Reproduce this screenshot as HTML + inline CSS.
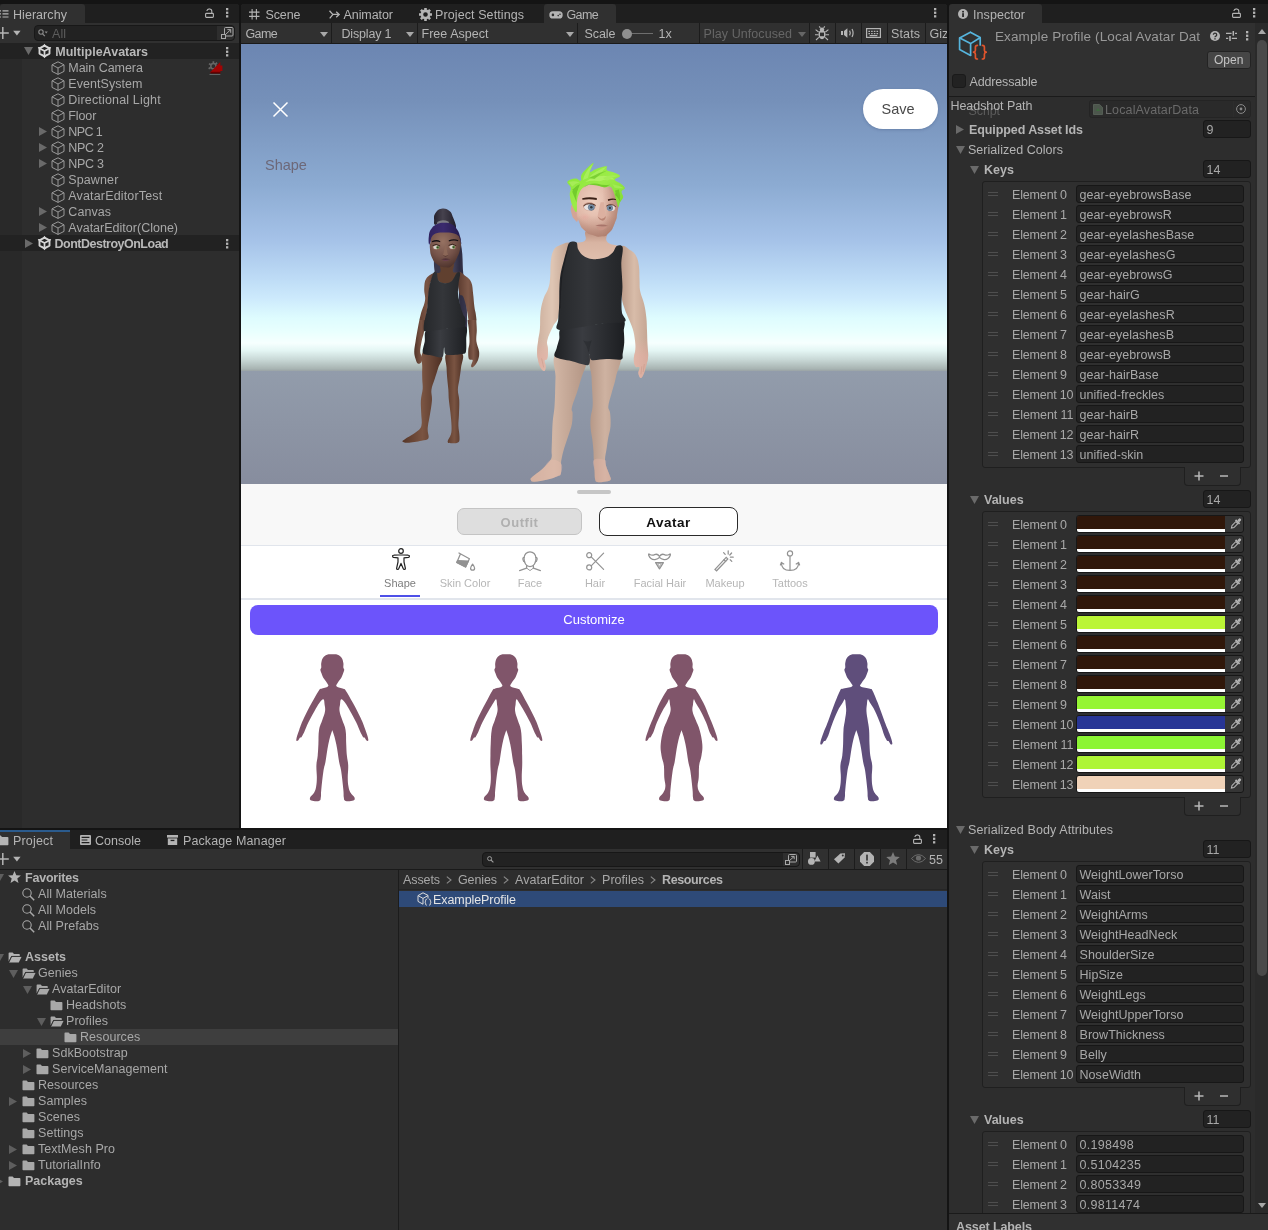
<!DOCTYPE html>
<html lang="en"><head><meta charset="utf-8"><title>Unity - MultipleAvatars</title>
<style>

*{box-sizing:border-box;margin:0;padding:0}
html,body{width:1268px;height:1230px;overflow:hidden;background:#141414}
body{position:relative;font-family:"Liberation Sans","DejaVu Sans",sans-serif;font-size:12.5px;letter-spacing:.05px;color:#a8a8a8;line-height:16px}
.abs,.p,.t,.r,svg.i{position:absolute}
.p{background:#2d2d2d;overflow:hidden}
.p,.fld{will-change:transform}
.t{white-space:nowrap;line-height:16px;height:16px;margin-top:1px}
.b{font-weight:700;letter-spacing:0}
.tabbar{position:absolute;left:0;top:0;right:0;height:19px;background:#1f1f1f}
.tab{position:absolute;top:0;height:19px;background:#303030;border-radius:3px 3px 0 0}
.tool{position:absolute;left:0;right:0;height:20px;background:#303030}
.sep{position:absolute;width:1px;background:#1c1c1c}
.hl{position:absolute;height:1px;background:#1a1a1a}
.fld{position:absolute;background:#222;border:1px solid #171717;border-radius:3px;height:18px;line-height:18px;padding-left:2.5px;white-space:nowrap;overflow:hidden;color:#a8a8a8}
.dim{color:#6d6d6d}
svg.i{overflow:visible}

</style></head>
<body>
<div class="p" style="left:0;top:4px;width:239px;height:824px;border-radius:0 3px 0 0">
<div class="tabbar"></div><div class="tab" style="left:0;width:85px"></div>
<svg class="i" style="left:0px;top:6px" width="9" height="8" viewBox="0 0 9 8" ><g stroke="#b4b4b4" stroke-width="1.2"><path d="M2.5 .8H8.5M2.5 3.9H8.5M2.5 7H8.5"/><path d="M-.5 .8H1M-.5 3.9H1M-.5 7H1"/></g></svg>
<div class="t" style="left:13px;top:2px;color:#b4b4b4">Hierarchy</div>
<svg class="i" style="left:204.5px;top:4px" width="9" height="10" viewBox="0 0 9 10" ><g fill="none" stroke="#b4b4b4" stroke-width="1.1"><rect x=".6" y="5.400" width="7.800" height="4" rx=".8"/><path d="M1.800 3C2.400 .2 6.800 .2 6.800 3.200V5.400"/></g></svg>
<svg class="i" style="left:226px;top:4.2px" width="3" height="10" viewBox="0 0 3 10" ><g fill="#b4b4b4"><rect x="0" y="0" width="2.3" height="2.3"/><rect x="0" y="3.6" width="2.3" height="2.3"/><rect x="0" y="7.200" width="2.3" height="2.3"/></g></svg>
<div class="tool" style="top:19px"></div>
<svg class="i" style="left:0px;top:23px" width="22" height="12" viewBox="0 0 22 12" ><path d="M2.8 0V12M-3.2 6H8.8" stroke="#b4b4b4" stroke-width="1.5" fill="none"/><path d="M13.2 3.8H20.6L16.9 8.4Z" fill="#b4b4b4"/></svg>
<div class="fld" style="left:34px;top:21px;width:201px;height:16px;border-radius:4px;background:#222;border-color:#181818"></div>
<div class="abs" style="left:217px;top:22px;width:17px;height:14px;background:#2e2e2e;border-radius:0 4px 4px 0"></div>
<svg class="i" style="left:38px;top:25px" width="10" height="8" viewBox="0 0 10 8" ><circle cx="3" cy="3" r="2.2" fill="none" stroke="#8c8c8c" stroke-width="1.1"/><path d="M4.6 4.8 6.8 7.2" stroke="#8c8c8c" stroke-width="1.2"/><path d="M6.6 2.6H9.8L8.2 4.6Z" fill="#8c8c8c"/></svg>
<div class="t" style="left:52px;top:21px;color:#5c5c5c">All</div>
<svg class="i" style="left:220.5px;top:23px" width="13" height="12" viewBox="0 0 13 12" ><g fill="none" stroke="#a8a8a8" stroke-width="1"><rect x="3.5" y=".5" width="8.5" height="8.5" rx="1"/><rect x=".5" y="7.5" width="4" height="4" fill="#2e2e2e"/><path d="M4.5 7.5 9.5 2.8M6.4 2.6H9.7V5.8"/></g></svg>
<div class="abs" style="left:0;top:39px;width:22px;height:785px;background:#292929"></div>
<div class="abs" style="left:0;top:39px;width:239px;height:16px;background:#222"></div>
<div class="abs" style="left:0;top:231px;width:239px;height:16px;background:#222"></div>
<svg class="i" style="left:24px;top:43px" width="9" height="8" viewBox="0 0 9 8" ><path d="M0 0H9L4.5 8Z" fill="#6a6a6a"/></svg>
<svg class="i" style="left:38px;top:40px" width="13" height="14" viewBox="0 0 13 14" ><g fill="none" stroke="#d6d6d6" stroke-linejoin="round"><path d="M6.5 1.7 11.5 4.4V9.6L6.5 12.3 1.5 9.6V4.4Z" stroke-width="1.9"/><path d="M1.8 4.5 6.5 7 11.2 4.5M6.5 7V12.2" stroke-width="1.7"/></g><path d="M6.5 -.2 8.6 2.8H4.4ZM-.2 3 3.5 3.2 1.5 6.6ZM13.2 3 9.5 3.2 11.5 6.6ZM6.5 14.2 4.2 11.2H8.800Z" fill="#d6d6d6"/><path d="M6.500 3.200V5.400M3.300 9 5 8M9.700 9 8 8" stroke="#222" stroke-width=".9"/></svg>
<div class="t " style="left:55.3px;top:39px;font-weight:700;color:#b9b9b9;letter-spacing:0.01px;">MultipleAvatars</div>
<svg class="i" style="left:226px;top:43.3px" width="3" height="10" viewBox="0 0 3 10" ><g fill="#b4b4b4"><rect x="0" y="0" width="2.3" height="2.3"/><rect x="0" y="3.6" width="2.3" height="2.3"/><rect x="0" y="7.200" width="2.3" height="2.3"/></g></svg>
<svg class="i" style="left:50.6px;top:56.8px" width="14" height="14" viewBox="0 0 14 14" ><g fill="none" stroke="#999" stroke-width="1" stroke-linejoin="round"><path d="M7 .8 13 3.8V10.4L7 13.4 1 10.4V3.8Z"/><path d="M1 3.8 7 7 13 3.8M7 7V13.4"/></g></svg>
<div class="t " style="left:68.3px;top:55px;letter-spacing:-0.04px;">Main Camera</div>
<svg class="i" style="left:50.6px;top:72.8px" width="14" height="14" viewBox="0 0 14 14" ><g fill="none" stroke="#999" stroke-width="1" stroke-linejoin="round"><path d="M7 .8 13 3.8V10.4L7 13.4 1 10.4V3.8Z"/><path d="M1 3.8 7 7 13 3.8M7 7V13.4"/></g></svg>
<div class="t " style="left:68.3px;top:71px;letter-spacing:0.06px;">EventSystem</div>
<svg class="i" style="left:50.6px;top:88.8px" width="14" height="14" viewBox="0 0 14 14" ><g fill="none" stroke="#999" stroke-width="1" stroke-linejoin="round"><path d="M7 .8 13 3.8V10.4L7 13.4 1 10.4V3.8Z"/><path d="M1 3.8 7 7 13 3.8M7 7V13.4"/></g></svg>
<div class="t " style="left:68.3px;top:87px;letter-spacing:0.17px;">Directional Light</div>
<svg class="i" style="left:50.6px;top:104.8px" width="14" height="14" viewBox="0 0 14 14" ><g fill="none" stroke="#999" stroke-width="1" stroke-linejoin="round"><path d="M7 .8 13 3.8V10.4L7 13.4 1 10.4V3.8Z"/><path d="M1 3.8 7 7 13 3.8M7 7V13.4"/></g></svg>
<div class="t " style="left:68.3px;top:103px;letter-spacing:-0.12px;">Floor</div>
<svg class="i" style="left:39px;top:123px" width="8" height="9" viewBox="0 0 8 9" ><path d="M0 0V9L8 4.5Z" fill="#6a6a6a"/></svg>
<svg class="i" style="left:50.6px;top:120.8px" width="14" height="14" viewBox="0 0 14 14" ><g fill="none" stroke="#999" stroke-width="1" stroke-linejoin="round"><path d="M7 .8 13 3.8V10.4L7 13.4 1 10.4V3.8Z"/><path d="M1 3.8 7 7 13 3.8M7 7V13.4"/></g></svg>
<div class="t " style="left:68.3px;top:119px;letter-spacing:-0.58px;">NPC 1</div>
<svg class="i" style="left:39px;top:139px" width="8" height="9" viewBox="0 0 8 9" ><path d="M0 0V9L8 4.5Z" fill="#6a6a6a"/></svg>
<svg class="i" style="left:50.6px;top:136.8px" width="14" height="14" viewBox="0 0 14 14" ><g fill="none" stroke="#999" stroke-width="1" stroke-linejoin="round"><path d="M7 .8 13 3.8V10.4L7 13.4 1 10.4V3.8Z"/><path d="M1 3.8 7 7 13 3.8M7 7V13.4"/></g></svg>
<div class="t " style="left:68.3px;top:135px;letter-spacing:-0.30px;">NPC 2</div>
<svg class="i" style="left:39px;top:155px" width="8" height="9" viewBox="0 0 8 9" ><path d="M0 0V9L8 4.5Z" fill="#6a6a6a"/></svg>
<svg class="i" style="left:50.6px;top:152.8px" width="14" height="14" viewBox="0 0 14 14" ><g fill="none" stroke="#999" stroke-width="1" stroke-linejoin="round"><path d="M7 .8 13 3.8V10.4L7 13.4 1 10.4V3.8Z"/><path d="M1 3.8 7 7 13 3.8M7 7V13.4"/></g></svg>
<div class="t " style="left:68.3px;top:151px;letter-spacing:-0.30px;">NPC 3</div>
<svg class="i" style="left:50.6px;top:168.8px" width="14" height="14" viewBox="0 0 14 14" ><g fill="none" stroke="#999" stroke-width="1" stroke-linejoin="round"><path d="M7 .8 13 3.8V10.4L7 13.4 1 10.4V3.8Z"/><path d="M1 3.8 7 7 13 3.8M7 7V13.4"/></g></svg>
<div class="t " style="left:68.3px;top:167px;letter-spacing:0.11px;">Spawner</div>
<svg class="i" style="left:50.6px;top:184.8px" width="14" height="14" viewBox="0 0 14 14" ><g fill="none" stroke="#999" stroke-width="1" stroke-linejoin="round"><path d="M7 .8 13 3.8V10.4L7 13.4 1 10.4V3.8Z"/><path d="M1 3.8 7 7 13 3.8M7 7V13.4"/></g></svg>
<div class="t " style="left:68.3px;top:183px;letter-spacing:0.16px;">AvatarEditorTest</div>
<svg class="i" style="left:39px;top:203px" width="8" height="9" viewBox="0 0 8 9" ><path d="M0 0V9L8 4.5Z" fill="#6a6a6a"/></svg>
<svg class="i" style="left:50.6px;top:200.8px" width="14" height="14" viewBox="0 0 14 14" ><g fill="none" stroke="#999" stroke-width="1" stroke-linejoin="round"><path d="M7 .8 13 3.8V10.4L7 13.4 1 10.4V3.8Z"/><path d="M1 3.8 7 7 13 3.8M7 7V13.4"/></g></svg>
<div class="t " style="left:68.3px;top:199px;letter-spacing:0.08px;">Canvas</div>
<svg class="i" style="left:39px;top:219px" width="8" height="9" viewBox="0 0 8 9" ><path d="M0 0V9L8 4.5Z" fill="#6a6a6a"/></svg>
<svg class="i" style="left:50.6px;top:216.8px" width="14" height="14" viewBox="0 0 14 14" ><g fill="none" stroke="#999" stroke-width="1" stroke-linejoin="round"><path d="M7 .8 13 3.8V10.4L7 13.4 1 10.4V3.8Z"/><path d="M1 3.8 7 7 13 3.8M7 7V13.4"/></g></svg>
<div class="t " style="left:68.3px;top:215px;letter-spacing:0.01px;">AvatarEditor(Clone)</div>
<svg class="i" style="left:207.8px;top:57.2px" width="15" height="14" viewBox="0 0 15 14" ><g fill="none" stroke="#666" stroke-width="1.5"><circle cx="5.4" cy="5.2" r="2.6"/><path d="M5.4 .2V2.200M1 2.600 2.800 3.800M.6 7.800 2.600 6.600M9 1.600 7.600 3.200" stroke-width="1.700"/></g><path d="M1.700 11.800 12.300 1.100V4.400H14.400V9.900H12.300V11.800Z" fill="#a00404"/><rect x="2.600" y="10.800" width="9.700" height="1.700" fill="#650000"/><rect x="1.500" y="13.100" width="10.800" height=".8" fill="#6e7474"/></svg>
<svg class="i" style="left:25px;top:235px" width="8" height="9" viewBox="0 0 8 9" ><path d="M0 0V9L8 4.5Z" fill="#6a6a6a"/></svg>
<svg class="i" style="left:38px;top:232px" width="13" height="14" viewBox="0 0 13 14" ><g fill="none" stroke="#d6d6d6" stroke-linejoin="round"><path d="M6.5 1.7 11.5 4.4V9.6L6.5 12.3 1.5 9.6V4.4Z" stroke-width="1.9"/><path d="M1.8 4.5 6.5 7 11.2 4.5M6.5 7V12.2" stroke-width="1.7"/></g><path d="M6.5 -.2 8.6 2.8H4.4ZM-.2 3 3.5 3.2 1.5 6.6ZM13.2 3 9.5 3.2 11.5 6.6ZM6.5 14.2 4.2 11.2H8.800Z" fill="#d6d6d6"/><path d="M6.500 3.200V5.400M3.300 9 5 8M9.700 9 8 8" stroke="#222" stroke-width=".9"/></svg>
<div class="t " style="left:54.5px;top:231px;font-weight:700;color:#b9b9b9;letter-spacing:-0.50px;">DontDestroyOnLoad</div>
<svg class="i" style="left:226px;top:235.3px" width="3" height="10" viewBox="0 0 3 10" ><g fill="#b4b4b4"><rect x="0" y="0" width="2.3" height="2.3"/><rect x="0" y="3.6" width="2.3" height="2.3"/><rect x="0" y="7.200" width="2.3" height="2.3"/></g></svg>
</div>
<div class="p" style="left:241px;top:4px;width:706px;height:824px;border-radius:3px 3px 0 0">
<div class="tabbar"></div><div class="tab" style="left:303px;width:72px"></div>
<svg class="i" style="left:8px;top:4.7px" width="10.5" height="10.5" viewBox="0 0 10.5 10.5" ><path d="M3.1 0V10.5M7.4 0V10.5M0 3.1H10.5M0 7.4H10.5" stroke="#b4b4b4" stroke-width="1.1" fill="none"/></svg>
<div class="t " style="left:24.5px;top:2px;color:#b4b4b4;letter-spacing:-0.11px;">Scene</div>
<svg class="i" style="left:87.5px;top:5.5px" width="11" height="9" viewBox="0 0 11 9" ><path d="M.5 .700 3.800 4.400H9.500M.700 8.300 3.800 4.600" stroke="#b4b4b4" stroke-width="1.300" fill="none"/><path d="M7.200 1.800 10.200 4.500 7.200 7.200" stroke="#b4b4b4" stroke-width="1.300" fill="none"/></svg>
<div class="t " style="left:102.5px;top:2px;color:#b4b4b4;letter-spacing:-0.07px;">Animator</div>
<svg class="i" style="left:178px;top:4px" width="13" height="13" viewBox="0 0 13 13" ><circle cx="6.5" cy="6.5" r="3.6" fill="none" stroke="#b4b4b4" stroke-width="2.6"/><g stroke="#b4b4b4" stroke-width="2.6"><path d="M6.5 0V13M0 6.5H13M1.9 1.9 11.1 11.1M11.1 1.9 1.9 11.1" stroke-dasharray="2.2 8.8 2.2 20"/></g></svg>
<div class="t " style="left:194px;top:2px;color:#b4b4b4;letter-spacing:0.10px;">Project Settings</div>
<svg class="i" style="left:308px;top:7px" width="14" height="8" viewBox="0 0 14 8" ><rect x=".3" y=".3" width="13.4" height="7.2" rx="3.6" fill="#b4b4b4"/><circle cx="3.9" cy="3.9" r="1.3" fill="#303030"/><circle cx="9.2" cy="4.6" r=".8" fill="#303030"/><circle cx="11" cy="3.2" r=".8" fill="#303030"/></svg>
<div class="t " style="left:325.5px;top:2px;color:#b4b4b4;letter-spacing:-0.60px;">Game</div>
<svg class="i" style="left:692.5px;top:4.2px" width="3" height="10" viewBox="0 0 3 10" ><g fill="#b4b4b4"><rect x="0" y="0" width="2.3" height="2.3"/><rect x="0" y="3.6" width="2.3" height="2.3"/><rect x="0" y="7.200" width="2.3" height="2.3"/></g></svg>
<div class="tool" style="top:19px;height:21px;border-bottom:1px solid #1a1a1a"></div>
<div class="t " style="left:4.5px;top:21px;color:#b4b4b4;letter-spacing:-0.60px;">Game</div>
<svg class="i" style="left:78.5px;top:28px" width="8" height="5" viewBox="0 0 8 5" ><path d="M0 0H8L4 5Z" fill="#a8a8a8"/></svg>
<div class="sep" style="left:90px;top:19px;height:20px"></div>
<div class="t " style="left:100.5px;top:21px;color:#b4b4b4;letter-spacing:-0.18px;">Display 1</div>
<svg class="i" style="left:164.5px;top:28px" width="8" height="5" viewBox="0 0 8 5" ><path d="M0 0H8L4 5Z" fill="#a8a8a8"/></svg>
<div class="sep" style="left:176px;top:19px;height:20px"></div>
<div class="t " style="left:180.5px;top:21px;color:#b4b4b4;letter-spacing:0.03px;">Free Aspect</div>
<svg class="i" style="left:324.5px;top:28px" width="8" height="5" viewBox="0 0 8 5" ><path d="M0 0H8L4 5Z" fill="#a8a8a8"/></svg>
<div class="sep" style="left:336px;top:19px;height:20px"></div>
<div class="t " style="left:343.5px;top:21px;color:#b4b4b4;letter-spacing:-0.07px;">Scale</div>
<div class="abs" style="left:385px;top:29px;width:27px;height:1px;background:#6e6e6e"></div>
<div class="abs" style="left:381px;top:24.5px;width:10px;height:10px;border-radius:5px;background:#8f8f8f"></div>
<div class="t " style="left:417.5px;top:21px;color:#b4b4b4;">1x</div>
<div class="sep" style="left:458px;top:19px;height:20px"></div>
<div class="t " style="left:462.5px;top:21px;color:#666;letter-spacing:0.07px;">Play Unfocused</div>
<svg class="i" style="left:556.5px;top:28px" width="8" height="5" viewBox="0 0 8 5" ><path d="M0 0H8L4 5Z" fill="#666"/></svg>
<div class="sep" style="left:568px;top:19px;height:20px"></div>
<svg class="i" style="left:573px;top:22px" width="16" height="15" viewBox="0 0 16 15" ><ellipse cx="8" cy="8.6" rx="3.6" ry="4.6" fill="#b4b4b4"/><circle cx="8" cy="3.6" r="2.2" fill="#b4b4b4"/><g stroke="#b4b4b4" stroke-width="1.1" fill="none"><path d="M4.6 6 1.6 3.6M11.4 6 14.4 3.6M4.4 8.8H1M11.6 8.8H15M4.8 11.4 2 14M11.2 11.4 14 14M6.4 1.8 5.2 .4M9.6 1.8 10.8 .4"/></g><rect x="6" y="6.6" width="4" height="3.6" fill="#303030"/></svg>
<div class="sep" style="left:594px;top:19px;height:20px"></div>
<svg class="i" style="left:600px;top:24px" width="14" height="10" viewBox="0 0 14 10" ><path d="M0 3H2V7H0ZM3 3 6.4 .2V9.8L3 7Z" fill="#b4b4b4"/><path d="M8.6 2.6Q10 5 8.6 7.4M11 1Q13.2 5 11 9" stroke="#b4b4b4" stroke-width="1.2" fill="none"/></svg>
<div class="sep" style="left:620px;top:19px;height:20px"></div>
<svg class="i" style="left:625px;top:24px" width="15" height="10" viewBox="0 0 15 10" ><rect x=".6" y=".6" width="13.8" height="8.8" fill="none" stroke="#b4b4b4" stroke-width="1.2"/><path d="M2.4 3.4H12.6M2.4 5.6H12.6" stroke="#b4b4b4" stroke-width="1.3" stroke-dasharray="1.6 1.1"/><path d="M3.6 7.6H11.4" stroke="#b4b4b4" stroke-width="1.2"/></svg>
<div class="sep" style="left:646px;top:19px;height:20px"></div>
<div class="t " style="left:650px;top:21px;color:#b4b4b4;letter-spacing:0.13px;">Stats</div>
<div class="sep" style="left:684px;top:19px;height:20px"></div>
<div class="t " style="left:688.5px;top:21px;color:#b4b4b4;">Gizmos</div>
<div class="abs" style="left:0;top:40px;width:706px;height:784px;background:#fff;overflow:hidden">
<div class="abs" style="left:0;top:0;width:706px;height:327px;background:linear-gradient(180deg,#6c86b2 0px,#7590b9 56px,#8cabd2 141px,#a5c2e8 196px,#bedcf6 235px,#cdeafc 254.5px,#defcfe 274px,#e8fffe 287px,#f6fffe 299px,#e4f6f4 306.5px,#c8d8d6 315.7px,#a8b4b2 324.8px,#9aa3a6 327px)"></div>
<div class="abs" style="left:0;top:327px;width:706px;height:113px;background:linear-gradient(180deg,#929cab,#878d9e)"></div>
<svg class="i" style="left:0;top:0" width="706" height="440" viewBox="0 0 706 440"><defs>
<linearGradient id="skA" x1="0" x2="1"><stop offset="0" stop-color="#d8b8a6"/><stop offset="1" stop-color="#c8a493"/></linearGradient>
<linearGradient id="skL" x1="0" x2="1"><stop offset="0" stop-color="#cdb09e"/><stop offset=".45" stop-color="#dfc6b4"/><stop offset="1" stop-color="#bfa08e"/></linearGradient>
<linearGradient id="skR" x1="0" x2="1"><stop offset="0" stop-color="#b89886"/><stop offset=".5" stop-color="#d8bca9"/><stop offset="1" stop-color="#c4a592"/></linearGradient>
<linearGradient id="skLeg" x1="0" x2="1"><stop offset="0" stop-color="#c6a998"/><stop offset=".4" stop-color="#d2b6a5"/><stop offset="1" stop-color="#b09281"/></linearGradient>
<linearGradient id="skLeg2" x1="0" x2="1"><stop offset="0" stop-color="#b49685"/><stop offset=".5" stop-color="#ceb2a1"/><stop offset="1" stop-color="#bc9f8e"/></linearGradient>
<linearGradient id="skN" x1="0" y1="0" x2="0" y2="1"><stop offset="0" stop-color="#b88c7c"/><stop offset=".4" stop-color="#d8b4a2"/><stop offset="1" stop-color="#e0c0ae"/></linearGradient>
<linearGradient id="handtint" x1="0" y1="0" x2="0" y2="1"><stop offset="0" stop-color="#e8b0a6" stop-opacity="0"/><stop offset=".4" stop-color="#e8b0a6" stop-opacity=".55"/><stop offset="1" stop-color="#e8b0a6" stop-opacity=".6"/></linearGradient>
<linearGradient id="blk" x1="0" x2="1"><stop offset="0" stop-color="#26282b"/><stop offset=".45" stop-color="#34363a"/><stop offset="1" stop-color="#222427"/></linearGradient>
<linearGradient id="blk2" x1="0" x2="1"><stop offset="0" stop-color="#1e2023"/><stop offset=".4" stop-color="#3a3c41"/><stop offset="1" stop-color="#1c1e21"/></linearGradient>
<radialGradient id="face" cx=".42" cy=".35" r=".75"><stop offset="0" stop-color="#efd0c0"/><stop offset=".55" stop-color="#e0b8a8"/><stop offset="1" stop-color="#b48474"/></radialGradient>
<linearGradient id="faceSh" x1="0" x2="1"><stop offset=".62" stop-color="#a87868" stop-opacity="0"/><stop offset="1" stop-color="#a87868" stop-opacity=".6"/></linearGradient>
<linearGradient id="faceSh2" x1="0" y1="0" x2="0" y2="1"><stop offset=".6" stop-color="#a87868" stop-opacity="0"/><stop offset="1" stop-color="#a87868" stop-opacity=".6"/></linearGradient>
<radialGradient id="blush"><stop offset="0" stop-color="#e8a098" stop-opacity=".4"/><stop offset="1" stop-color="#e8a098" stop-opacity="0"/></radialGradient>
<linearGradient id="hair" x1="0" y1="0" x2="1" y2="1"><stop offset="0" stop-color="#86e436"/><stop offset=".5" stop-color="#9cec48"/><stop offset="1" stop-color="#7cd830"/></linearGradient>
<linearGradient id="pony" x1="0" x2="1"><stop offset="0" stop-color="#4a4860"/><stop offset=".5" stop-color="#2e2c40"/><stop offset="1" stop-color="#3a3850"/></linearGradient>
<linearGradient id="bun" x1="0" x2="1"><stop offset="0" stop-color="#26222e"/><stop offset=".4" stop-color="#46424e"/><stop offset="1" stop-color="#221e2a"/></linearGradient>
<linearGradient id="ncap" x1="0" x2="1"><stop offset="0" stop-color="#30225e"/><stop offset=".45" stop-color="#3a2a6e"/><stop offset="1" stop-color="#241a48"/></linearGradient>
<radialGradient id="nface" cx=".42" cy=".3" r=".75"><stop offset="0" stop-color="#967262"/><stop offset=".55" stop-color="#75534a"/><stop offset="1" stop-color="#4a3029"/></radialGradient>
<linearGradient id="nskL" x1="0" x2="1"><stop offset="0" stop-color="#523428"/><stop offset=".6" stop-color="#7a5444"/><stop offset="1" stop-color="#5c3c30"/></linearGradient>
<linearGradient id="nskR" x1="0" x2="1"><stop offset="0" stop-color="#5a3a2e"/><stop offset=".5" stop-color="#7e5848"/><stop offset="1" stop-color="#54362a"/></linearGradient>
<linearGradient id="nskL2" x1="0" x2="1"><stop offset="0" stop-color="#523428"/><stop offset=".6" stop-color="#7a5444"/><stop offset="1" stop-color="#5c3c30"/></linearGradient>
<linearGradient id="nskR2" x1="0" x2="1"><stop offset="0" stop-color="#5a3a2e"/><stop offset=".5" stop-color="#7e5848"/><stop offset="1" stop-color="#54362a"/></linearGradient>
<linearGradient id="nleg" x1="0" x2="1"><stop offset="0" stop-color="#563628"/><stop offset=".5" stop-color="#7a5442"/><stop offset="1" stop-color="#4e3024"/></linearGradient>
<clipPath id="fclip"><rect x="0" y="0" width="1100" height="1300"/></clipPath><clipPath id="npcclip"><rect x="100" y="90" width="200" height="186"/></clipPath></defs><g transform="translate(139.000 146.000) scale(0.130081)"><path d="M590 330C605.2 308 618 388 628 450C638 512 633.2 570 640 640C646.8 710 656 720 662 800C668 880 671.2 986 670 1040C668.8 1094 662 1068 656 1070C650 1072 648.8 1084 640 1050C631.2 1016 620 966 612 900C604 834 610.4 770 600 720C589.6 670 569.6 682 560 650C550.4 618 546 624 552 560C558 496 574.8 352 590 330Z" fill="url(#pony)" /></g><g transform="translate(154.000 276.000) scale(0.105668)"><path d="M270 300C236.6 320.2 260.2 402.3 258 450C255.8 497.7 257.3 523.3 258 560C258.7 596.7 264.4 613.3 262 650C259.6 686.7 247.6 717.8 245 760C242.4 802.2 247.1 836 248 880C248.9 924 258.8 967 250 1000C241.2 1033 229.3 1036.2 200 1060C170.7 1083.8 113.5 1113.5 90 1130C66.5 1146.5 66.5 1144.1 72 1150C77.5 1155.9 87.4 1163.5 120 1162C152.6 1160.5 214.2 1149.3 250 1142C285.8 1134.7 304 1138.9 315 1122C326 1105.1 310.6 1072.4 310 1050C309.4 1027.6 308.3 1027.5 312 1000C315.7 972.5 323 944 330 900C337 856 347.2 804 350 760C352.8 716 340.4 696.7 345 660C349.6 623.3 363.1 598.5 375 560C386.9 521.5 398.1 490.3 410 450C421.9 409.7 465.7 367.5 440 340C414.3 312.5 303.4 279.8 270 300Z" fill="url(#nleg)" />
<path d="M487 320C459.9 343.8 486.5 406 488 450C489.5 494 491.9 521.5 495 560C498.1 598.5 502.2 623.3 505 660C507.8 696.7 506.3 719.7 510 760C513.7 800.3 520.4 836 525 880C529.6 924 534.1 963.3 535 1000C535.9 1036.7 536.8 1052.5 530 1080C523.2 1107.5 498 1134.2 498 1150C498 1165.8 511.3 1164.9 530 1166C548.7 1167.1 585.3 1168.1 600 1156C614.7 1143.9 610 1128.6 610 1100C610 1071.4 600.9 1036.7 600 1000C599.1 963.3 603.5 944 605 900C606.5 856 609.8 804 608 760C606.2 716 594.6 696.7 595 660C595.4 623.3 604.5 598.5 610 560C615.5 521.5 620.2 494 625 450C629.8 406 661.3 343.8 636 320C610.7 296.2 514.1 296.2 487 320Z" fill="url(#nleg)" />
<g clip-path="url(#fclip)">
<path d="M240 -40C229.2 -32.7 236.1 -25.7 231 0C225.9 25.7 218.6 63.3 212 100C205.4 136.7 200.5 163.3 195 200C189.5 236.7 182 268.8 182 300C182 331.2 188.9 349.5 195 370C201.1 390.5 204.9 406.5 215 412C225.1 417.5 242.7 411.4 250 400C257.3 388.6 257.2 368.3 255 350C252.8 331.7 238.6 327.5 238 300C237.4 272.5 245 235.8 252 200C259 164.2 269 149 276 105C283 61 296.6 -13.4 290 -40C283.4 -66.6 250.8 -47.3 240 -40Z" fill="url(#nskL2)" />
<path d="M690 -40C678.1 -14.3 697.2 54.2 700 100C702.8 145.8 706.3 175.2 705 210C703.7 244.8 693.9 260.7 693 290C692.1 319.3 692.3 353.5 700 370C707.7 386.5 731.3 367.9 735 380C738.7 392.1 718.7 424.6 720 436C721.3 447.4 730.1 452.3 742 442C753.9 431.7 775.1 406 785 380C794.9 354 798.8 333 796 300C793.2 267 774 236.7 770 200C766 163.3 774 133 774 100C774 67 771.6 45.7 770 20C768.4 -5.7 779.7 -29 765 -40C750.3 -51 701.9 -65.7 690 -40Z" fill="url(#nskR2)" />
</g>
<path d="M300 98C329.7 80 424.8 85.4 480 80C535.2 74.6 638.9 47 668 62C697.1 77 673.4 144.9 674 180C674.6 215.1 677.1 274.7 672 296C666.9 317.3 668 317.2 640 322C612 326.8 511.2 337.3 485 328C458.8 318.7 470.6 256.4 465 260C459.4 263.6 465.2 340.6 448 352C430.8 363.4 377.6 342 350 336C322.4 330 274.2 332.4 264 312C253.8 291.6 276.6 232.1 282 200C287.4 167.9 270.3 116 300 98Z" fill="url(#blk2)" />
<path d="M300 -40C275.1 -30.3 264 97.7 276 106C288 114.3 454.3 86.8 480 84C505.7 81.2 650.7 72.3 662 64C673.3 55.7 674.1 -33.1 650 -40C625.9 -46.9 324.9 -49.7 300 -40Z" fill="url(#blk)" /></g><g clip-path="url(#npcclip)"><g transform="translate(139.000 146.000) scale(0.130081)"><path d="M418 520C411 532.7 414.7 615.7 424 636C433.3 656.3 467 654.7 474 642C481 629.3 475.3 580.3 466 560C456.7 539.7 425 507.3 418 520Z" fill="#3a384c" />
<path d="M416 232C416 211.5 410.9 200.5 424 180C437.1 159.5 446.8 148.7 472 144C497.2 139.3 511 144.1 532 160C553 175.9 549.9 181.7 562 212C574.1 242.3 589.1 277.4 584 290C578.9 302.6 566.6 274.9 540 266C513.4 257.1 497.1 251.5 470 252C442.9 252.5 436.6 272.7 424 268C411.4 263.3 416 252.5 416 232Z" fill="url(#bun)" />
<path d="M440 246Q480 222 528 244L530 262Q480 244 440 266Z" fill="#7c7c84"/>
<path d="M420 636C411.2 636 372 655.2 356 680C340 704.8 342 726 340 760C338 794 351.6 810 346 850C340.4 890 323.6 914 312 960C300.4 1006 296.8 1024 288 1080C279.2 1136 259.6 1208 268 1240C276.4 1272 314.8 1278 330 1240C345.2 1202 336.8 1118 344 1050C351.2 982 358.8 958 366 900C373.2 842 373.2 804 380 760C386.8 716 392 704.8 400 680C408 655.2 428.8 636 420 636Z" fill="url(#nskL)" />
<path d="M600 636C610 610.8 639.6 648.8 660 664C680.4 679.2 690.8 684.8 702 712C713.2 739.2 711.2 762.4 716 800C720.8 837.6 720.8 860 726 900C731.2 940 736 932 742 1000C748 1068 766.4 1192 756 1240C745.6 1288 705.2 1288 690 1240C674.8 1192 689.2 1082 680 1000C670.8 918 658 872 644 830C630 788 618.8 828.8 610 790C601.2 751.2 590 661.2 600 636Z" fill="url(#nskR)" />
<path d="M468 560C448.4 574 473.6 613.2 464 630C454.4 646.8 422.8 630 420 644C417.2 658 434 684.8 450 700C466 715.2 478.8 719.2 500 720C521.2 720.8 536 720 556 704C576 688 598.8 655.2 600 640C601.2 624.8 569.6 644 562 628C554.4 612 580.8 573.6 562 560C543.2 546.4 487.6 546 468 560Z" fill="#60402f" />
<path d="M388 400C383.7 427.2 380.8 420 384 452C387.2 484 385.1 488 400 520C414.9 552 413.3 552.3 440 572C466.7 591.7 470.1 591.3 500 594C529.9 596.7 527.5 601.7 552 582C576.5 562.3 574.9 554.7 592 520C609.1 485.3 608.5 486.7 616 452C623.5 417.3 623.7 418.3 620 390C616.3 361.7 618 365.2 602 346C586 326.8 603.2 325.5 560 318C516.8 310.5 482.7 309.5 440 318C397.3 326.5 413.9 328.1 400 350C386.1 371.9 392.3 372.8 388 400Z" fill="url(#nface)" />
<path d="M376 418C373.2 406.8 371.8 377.5 376 350C380.2 322.5 380.5 319.8 394 300C407.5 280.2 410.7 276.2 434 265C457.3 253.8 466 252 494 252C522 252 530.7 252.6 554 265C577.3 277.4 579.5 282.8 594 305C608.5 327.2 608.8 333.6 616 360C623.2 386.4 625.5 414.3 625 418C624.5 421.7 620.1 391.9 614 376C607.9 360.1 613 360.5 599 350C585 339.5 578.5 336.6 554 331C529.5 325.4 522 325.5 494 326C466 326.5 456.2 325.1 434 333C411.8 340.9 409.7 344.8 399 360C388.3 375.2 393.4 384.5 388 398C382.6 411.5 378.8 429.2 376 418Z" fill="url(#ncap)" />
<path d="M398 394Q436 376 464 394L462 402Q436 388 400 402Z" fill="#141014"/><path d="M528 386Q570 370 602 386L600 394Q570 382 530 396Z" fill="#141014"/>
<ellipse cx="432" cy="438" rx="30" ry="22" fill="#8c6252"/><ellipse cx="432" cy="440" rx="22" ry="15" fill="#d8d2cc"/><circle cx="444" cy="441" r="12" fill="#66864a"/><circle cx="444" cy="441" r="5" fill="#1c2414"/>
<ellipse cx="556" cy="436" rx="30" ry="22" fill="#8c6252"/><ellipse cx="556" cy="438" rx="22" ry="15" fill="#d8d2cc"/><circle cx="566" cy="439" r="12" fill="#66864a"/><circle cx="566" cy="439" r="5" fill="#1c2414"/>
<path d="M404 428Q432 408 462 430M528 426Q556 406 586 428" fill="none" stroke="#1c1210" stroke-width="6"/>
<path d="M496 430Q492 480 484 498Q502 512 524 498Q514 480 512 430Z" fill="#8c6858"/>
<path d="M480 498Q502 516 528 498Q516 510 504 511Q490 510 480 498Z" fill="#3c2620"/>
<path d="M470 533Q504 520 540 533Q504 540 470 533Z" fill="#452634"/>
<path d="M474 536Q504 542 536 536Q504 556 474 536Z" fill="#6a4050"/>
<path d="M410 640C420 619 429.3 624.7 436 634C442.7 643.3 439.3 682.3 450 696C460.7 709.7 483 715.3 500 716C517 716.7 537 713 552 700C567 687 579.3 648 590 638C600.7 628 613.7 626.3 616 640C618.3 653.7 606.7 693.3 604 720C601.3 746.7 597.3 770 600 800C602.7 830 611 858 620 900C629 942 674 1023.3 654 1052C634 1080.7 551.7 1066 500 1072C448.3 1078 366.7 1116.7 344 1088C321.3 1059.3 358.7 954.7 364 900C369.3 845.3 368.3 803.3 376 760C383.7 716.7 400 661 410 640Z" fill="url(#blk)" /></g></g><g transform="translate(279.000 316.000) scale(0.110412)"><path d="M330 -60C277.9 -21.5 324.2 84 322 150C319.8 216 319.8 248.7 318 300C316.2 351.3 316 382.3 312 430C308 477.7 300 510.5 296 560C292 609.5 291.8 652.3 290 700C288.2 747.7 287.8 783.3 286 820C284.2 856.7 295.8 868.8 280 900C264.2 931.2 231.2 960.7 200 990C168.8 1019.3 128.7 1042.4 110 1060C91.3 1077.6 94.3 1078.3 98 1086C101.7 1093.7 102.1 1102.7 130 1102C157.9 1101.3 211.5 1091.2 250 1082C288.5 1072.8 318 1061.5 340 1052C362 1042.5 364.1 1048.7 370 1030C375.9 1011.3 370.9 973.8 372 950C373.1 926.2 370.9 927.5 376 900C381.1 872.5 388.3 840.3 400 800C411.7 759.7 427.2 720.3 440 680C452.8 639.7 463.4 616.7 470 580C476.6 543.3 476 507.5 476 480C476 452.5 461.9 466.7 470 430C478.1 393.3 503.5 331.3 520 280C536.5 228.7 545.3 194 560 150C574.7 106 591.6 78.5 600 40C608.4 1.5 655.5 -41.7 606 -60C556.5 -78.3 382.1 -98.5 330 -60Z" fill="url(#skLeg)" />
<path d="M644 -60C597.4 -21.5 646 84 648 150C650 216 653.2 250.5 655 300C656.8 349.5 660.8 379.7 658 420C655.2 460.3 643.3 483.3 640 520C636.7 556.7 637.2 583.3 640 620C642.8 656.7 650.4 683.3 655 720C659.6 756.7 662.6 787 665 820C667.4 853 666.2 867 668 900C669.8 933 672.8 967 675 1000C677.2 1033 675.4 1060.6 680 1080C684.6 1099.4 685.3 1102 700 1106C714.7 1110 738 1105.7 760 1102C782 1098.3 810.8 1097.4 820 1086C829.2 1074.6 817.3 1063.1 810 1040C802.7 1016.9 787.3 985.7 780 960C772.7 934.3 769.1 929.3 770 900C770.9 870.7 779.5 836.7 785 800C790.5 763.3 793.6 736.7 800 700C806.4 663.3 817.1 640.3 820 600C822.9 559.7 819.7 513 816 480C812.3 447 797.4 453 800 420C802.6 387 817.2 349.5 830 300C842.8 250.5 856.8 216 870 150C883.2 84 943.4 -21.5 902 -60C860.6 -98.5 690.6 -98.5 644 -60Z" fill="url(#skLeg2)" />
<path d="M282 905C247.2 915 234.4 959 200 990C165.6 1021 130.4 1040.8 110 1060C89.6 1079.2 94 1077.6 98 1086C102 1094.4 99.6 1102.8 130 1102C160.4 1101.2 208 1092 250 1082C292 1072 316 1062.4 340 1052C364 1041.6 363.2 1052.4 370 1030C376.8 1007.6 391.6 965 374 940C356.4 915 316.8 895 282 905Z" fill="#e6bcae" opacity=".45"/>
<path d="M668 905C649 924 672.6 965 675 1000C677.4 1035 675 1058.8 680 1080C685 1101.2 684 1101.6 700 1106C716 1110.4 736 1106 760 1102C784 1098 810 1098.4 820 1086C830 1073.6 818 1065.2 810 1040C802 1014.8 788 987 780 960C772 933 792.4 916 770 905C747.6 894 687 886 668 905Z" fill="#e2b6a8" opacity=".45"/></g><g transform="translate(279.000 196.000) scale(0.113821)"><path d="M440 28C428 8 370 35.6 340 50C310 64.4 304 70 290 100C276 130 275 154 270 200C265 246 269 286 265 330C261 374 262 382 250 420C238 458 219 476 205 520C191 564 186 588 180 640C174 692 179 732 175 780C171 828 165 840 160 880C155 920 150 944 150 980C150 1016 153 1030 160 1060C167 1090 174 1112 185 1130C196 1148 206.8 1154 215 1150C223.2 1146 225.8 1127.6 226 1110C226.2 1092.4 213.2 1076 216 1062C218.8 1048 234 1060.4 240 1040C246 1019.6 246 992 246 960C246 928 231.2 920 240 880C248.8 840 270 804 290 760C310 716 326 732 340 660C354 588 348 502 360 400C372 298 384 224.4 400 150C416 75.6 452 48 440 28Z" fill="url(#skL)" />
<path d="M890 62C908 30 944 74.4 970 90C996 105.6 1005 112 1020 140C1035 168 1039 188 1045 230C1051 272 1047.8 306 1050 350C1052.2 394 1048 408 1056 450C1064 492 1079.2 514 1090 560C1100.8 606 1104.8 632 1110 680C1115.2 728 1114 752 1116 800C1118 848 1118 876 1120 920C1122 964 1128 984 1126 1020C1124 1056 1118 1068 1110 1100C1102 1132 1096 1157.6 1086 1180C1076 1202.4 1069.2 1214 1060 1212C1050.8 1210 1042 1188.4 1040 1170C1038 1151.6 1055.6 1132 1050 1120C1044.4 1108 1022 1126 1012 1110C1002 1094 999.6 1070 1000 1040C1000.4 1010 1012 992 1014 960C1016 928 1014.8 916 1010 880C1005.2 844 1002 820 990 780C978 740 964.4 716 950 680C935.6 644 930 640 918 600C906 560 897.6 550 890 480C882.4 410 880 333.6 880 250C880 166.4 872 94 890 62Z" fill="url(#skR)" />
<path d="M584 -80C555 -68.3 582.7 -26 578 -10C573.3 6 574 7.7 556 16C538 24.3 476 19.3 470 40C464 60.7 485 115 520 140C555 165 630 191.7 680 190C730 188.3 788.3 151.3 820 130C851.7 108.7 875 78 870 62C865 46 808.7 44.3 790 34C771.3 23.7 764.3 19 758 0C751.7 -19 781 -66.7 752 -80C723 -93.3 613 -91.7 584 -80Z" fill="url(#skN)" />
<path d="M372 770C416.2 751.2 560.8 754.6 640 745C719.2 735.4 859.2 697.8 900 706C940.8 714.2 909.6 770.9 912 800C914.4 829.1 917.5 870 916 900C914.5 930 905.9 977.5 902 1000C898.1 1022.5 911.3 1043.1 890 1050C868.7 1056.9 799.3 1045.4 760 1046C720.7 1046.6 649.9 1060.9 628 1054C606.1 1047.1 618.2 993.4 614 1000C609.8 1006.6 624.6 1088.4 600 1098C575.4 1107.6 493.8 1074.8 450 1064C406.2 1053.2 327.2 1043.1 308 1026C288.8 1008.9 316.4 973.4 322 950C327.6 926.6 337.5 897 345 870C352.5 843 327.8 788.8 372 770Z" fill="url(#blk2)" />
<path d="M556 880Q590 930 604 990Q612 930 630 880Q592 905 556 880Z" fill="#17181b" opacity=".28"/>
<clipPath id="armsclip"><path d="M440 28C428 8 370 35.6 340 50C310 64.4 304 70 290 100C276 130 275 154 270 200C265 246 269 286 265 330C261 374 262 382 250 420C238 458 219 476 205 520C191 564 186 588 180 640C174 692 179 732 175 780C171 828 165 840 160 880C155 920 150 944 150 980C150 1016 153 1030 160 1060C167 1090 174 1112 185 1130C196 1148 206.8 1154 215 1150C223.2 1146 225.8 1127.6 226 1110C226.2 1092.4 213.2 1076 216 1062C218.8 1048 234 1060.4 240 1040C246 1019.6 246 992 246 960C246 928 231.2 920 240 880C248.8 840 270 804 290 760C310 716 326 732 340 660C354 588 348 502 360 400C372 298 384 224.4 400 150C416 75.6 452 48 440 28Z"/><path d="M890 62C908 30 944 74.4 970 90C996 105.6 1005 112 1020 140C1035 168 1039 188 1045 230C1051 272 1047.8 306 1050 350C1052.2 394 1048 408 1056 450C1064 492 1079.2 514 1090 560C1100.8 606 1104.8 632 1110 680C1115.2 728 1114 752 1116 800C1118 848 1118 876 1120 920C1122 964 1128 984 1126 1020C1124 1056 1118 1068 1110 1100C1102 1132 1096 1157.6 1086 1180C1076 1202.4 1069.2 1214 1060 1212C1050.8 1210 1042 1188.4 1040 1170C1038 1151.6 1055.6 1132 1050 1120C1044.4 1108 1022 1126 1012 1110C1002 1094 999.6 1070 1000 1040C1000.4 1010 1012 992 1014 960C1016 928 1014.8 916 1010 880C1005.2 844 1002 820 990 780C978 740 964.4 716 950 680C935.6 644 930 640 918 600C906 560 897.6 550 890 480C882.4 410 880 333.6 880 250C880 166.4 872 94 890 62Z"/></clipPath>
<rect x="100" y="860" width="1100" height="400" fill="url(#handtint)" clip-path="url(#armsclip)"/>
<path d="M190 1040 208 1120M1070 1110 1062 1180M1092 1090 1082 1160" stroke="#b88878" stroke-width="5" fill="none" opacity=".6"/>
<path d="M435 22C449.2 10.3 482.5 10.3 495 20C507.5 29.7 501.7 61.7 510 80C518.3 98.3 530 116.7 545 130C560 143.3 577.5 153.7 600 160C622.5 166.3 653.3 169.7 680 168C706.7 166.3 737.5 159.7 760 150C782.5 140.3 800 126.3 815 110C830 93.7 835.5 59.7 850 52C864.5 44.3 895.3 39.3 902 64C908.7 88.7 891 157.3 890 200C889 242.7 894.3 283.3 896 320C897.7 356.7 900.7 383.3 900 420C899.3 456.7 892.7 503.3 892 540C891.3 576.7 891 610.7 896 640C901 669.3 944.7 700.7 922 716C899.3 731.3 813.7 725.3 760 732C706.3 738.7 670 746.7 600 756C530 765.3 384 797.3 340 788C296 778.7 335.2 738 336 700C336.8 662 343.3 606.7 345 560C346.7 513.3 344.2 463.3 346 420C347.8 376.7 349.5 340 356 300C362.5 260 376 215 385 180C394 145 401.7 116.3 410 90C418.3 63.7 420.8 33.7 435 22Z" fill="url(#blk)" />
<path d="M430 40Q395 170 368 300Q352 450 350 600" fill="none" stroke="#17181b" stroke-width="10" opacity=".6"/></g><g transform="translate(289.000 116.000) scale(0.105691)"><path d="M405 430C384.3 420 391.3 423.3 388 450C384.7 476.7 384.3 473.3 395 510C405.7 546.7 401 540 420 560C439 580 442 596.7 452 570C462 543.3 465.7 526.7 450 480C434.3 433.3 425.7 440 405 430Z" fill="#d4a494" />
<path d="M470 290C430 338.3 450 316.7 440 380C430 443.3 432.7 413.3 440 480C447.3 546.7 435.3 516.7 462 580C488.7 643.3 474 626 520 670C566 714 546.7 694.7 600 712C653.3 729.3 631.7 729.3 680 722C728.3 714.7 705 730.7 745 690C785 649.3 773 663.3 800 600C827 536.7 815.3 566.7 826 500C836.7 433.3 840.7 466.7 832 400C823.3 333.3 844 353.3 800 300C756 246.7 780 261.7 700 240C620 218.3 636.7 218.3 560 235C483.3 251.7 510 241.7 470 290Z" fill="url(#face)" />
<path d="M470 290C430 338.3 450 316.7 440 380C430 443.3 432.7 413.3 440 480C447.3 546.7 435.3 516.7 462 580C488.7 643.3 474 626 520 670C566 714 546.7 694.7 600 712C653.3 729.3 631.7 729.3 680 722C728.3 714.7 705 730.7 745 690C785 649.3 773 663.3 800 600C827 536.7 815.3 566.7 826 500C836.7 433.3 840.7 466.7 832 400C823.3 333.3 844 353.3 800 300C756 246.7 780 261.7 700 240C620 218.3 636.7 218.3 560 235C483.3 251.7 510 241.7 470 290Z" fill="url(#faceSh)" />
<path d="M470 290C430 338.3 450 316.7 440 380C430 443.3 432.7 413.3 440 480C447.3 546.7 435.3 516.7 462 580C488.7 643.3 474 626 520 670C566 714 546.7 694.7 600 712C653.3 729.3 631.7 729.3 680 722C728.3 714.7 705 730.7 745 690C785 649.3 773 663.3 800 600C827 536.7 815.3 566.7 826 500C836.7 433.3 840.7 466.7 832 400C823.3 333.3 844 353.3 800 300C756 246.7 780 261.7 700 240C620 218.3 636.7 218.3 560 235C483.3 251.7 510 241.7 470 290Z" fill="url(#faceSh2)" />
<ellipse cx="520" cy="540" rx="60" ry="40" fill="url(#blush)"/>
<path d="M494 362Q560 345 632 360L632 378Q560 364 496 376Z" fill="#3a2016"/>
<path d="M736 372Q790 356 822 374L820 382Q790 370 740 388Z" fill="#3a2016"/>
<ellipse cx="562" cy="440" rx="58" ry="40" fill="#c49484"/>
<ellipse cx="562" cy="446" rx="50" ry="32" fill="#e6e2e2"/>
<circle cx="580" cy="448" r="29" fill="#7890a8" stroke="#4c6078" stroke-width="5"/><circle cx="580" cy="448" r="12" fill="#30383f"/>
<path d="M506 434Q560 394 622 430" fill="none" stroke="#4a2c22" stroke-width="9"/>
<ellipse cx="766" cy="450" rx="48" ry="38" fill="#c49484"/>
<ellipse cx="764" cy="454" rx="40" ry="30" fill="#e2dede"/>
<circle cx="756" cy="454" r="26" fill="#7890a8" stroke="#4c6078" stroke-width="5"/><circle cx="756" cy="454" r="11" fill="#30383f"/>
<path d="M722 436Q770 406 812 442" fill="none" stroke="#4a2c22" stroke-width="8"/>
<path d="M668 400Q650 480 640 530Q650 570 690 572Q722 560 716 520Q700 470 700 400Z" fill="#dcb0a0"/>
<path d="M640 535Q655 575 690 574Q720 562 716 530Q700 560 672 556Z" fill="#b88474"/>
<path d="M618 622Q680 598 740 624Q680 634 618 622Z" fill="#a8746a"/>
<path d="M624 630Q680 640 734 630Q700 668 660 664Q636 656 624 630Z" fill="#c89486"/>
<path d="M440 492C431.6 500.4 411.7 459.7 400 430C388.3 400.3 378.6 360.8 376 330C373.4 299.2 390 284.9 386 262C382 239.1 345.9 220.8 354 205C362.1 189.2 406.5 177.7 430 176C453.5 174.3 470.6 204.4 482 196C493.4 187.6 470.4 161.2 492 130C513.6 98.8 586.4 29.3 600 26C613.6 22.7 561.2 101.4 566 112C570.8 122.6 597.4 93.5 626 84C654.6 74.5 703.3 57.8 722 60C740.7 62.2 713.7 85 728 96C742.3 107 777.3 109.7 800 120C822.7 130.3 851.6 139.5 852 152C852.4 164.5 800.2 174.4 802 188C803.8 201.6 844.4 211.7 862 226C879.6 240.3 897.3 252.4 898 266C898.7 279.6 868.9 284.2 866 300C863.1 315.8 884.6 333.7 882 352C879.4 370.3 860.4 383.1 852 400C843.6 416.9 842.6 446.9 836 444C829.4 441.1 824.1 409.7 816 384C807.9 358.3 802.3 328.2 792 304C781.7 279.8 776.9 260.4 760 252C743.1 243.6 722 260.6 700 258C678 255.4 665.7 242.8 640 238C614.3 233.2 585.7 227.6 560 232C534.3 236.4 517.2 247.3 500 262C482.8 276.7 475.9 289.6 466 312C456.1 334.4 450.8 351 446 384C441.2 417 448.4 483.6 440 492Z" fill="url(#hair)"/>
<path d="M520 210Q600 150 700 150Q780 160 800 186Q720 176 660 200Q580 190 520 210Z" fill="#b4f268" opacity=".8"/>
<path d="M500 190Q520 110 596 36Q560 110 548 170Z" fill="#a8ee5c"/>
<path d="M560 160Q640 90 720 66Q690 110 640 150Z" fill="#aaf05e" opacity=".9"/>
<path d="M560 170Q640 120 730 100Q660 130 610 180Z" fill="#6cc428" opacity=".7"/>
<path d="M690 170Q760 130 846 152Q780 160 730 196Z" fill="#a6ec58"/>
<path d="M366 208Q420 190 470 214Q430 220 400 250Z" fill="#a6ec58"/>
<path d="M780 230Q840 240 892 268Q840 270 800 262Z" fill="#a2ea54"/>
<path d="M400 280Q440 260 470 232Q450 290 430 330Z" fill="#68c026" opacity=".8"/>
<path d="M812 300Q850 340 856 396Q830 350 806 330Z" fill="#68c026" opacity=".8"/>
<path d="M500 262Q560 215 640 225Q700 245 760 232Q720 262 700 258Q640 238 560 232Z" fill="#74cc2c"/>
<path d="M400 300Q420 250 470 230Q430 300 440 400Z" fill="#74cc2c"/>
<path d="M800 290Q840 330 850 400Q860 340 840 280Z" fill="#74cc2c"/></g></svg>
<svg class="i" style="left:32px;top:57.5px" width="15" height="15" viewBox="0 0 15 15" ><path d="M.5 .5 14.5 14.5M14.5 .5 .5 14.5" stroke="#fff" stroke-width="1.5" fill="none"/></svg>
<div class="t" style="left:24px;top:110px;font-size:14.5px;letter-spacing:0;color:#6d6878;line-height:20px;height:20px">Shape</div>
<div class="abs" style="left:622px;top:45px;width:75px;height:40px;border-radius:20px;background:#fff;box-shadow:0 1px 3px rgba(40,60,100,.25);color:#4a4a4a;font-size:14.5px;letter-spacing:0;line-height:40px;text-align:center;padding-right:5px">Save</div>
<div class="abs" style="left:0;top:440px;width:706px;height:344px;background:#fff"></div>
<div class="abs" style="left:0;top:440px;width:706px;height:62px;background:#f8f8f8;border-bottom:1px solid #e1e5ec"></div>
<div class="abs" style="left:336px;top:445.5px;width:34px;height:4.5px;border-radius:2.5px;background:#c6c6c6"></div>
<div class="abs" style="left:216px;top:464px;width:125px;height:27px;border-radius:7px;background:#dedede;border:1px solid #c4c4c4;color:#b0b0b0;font-weight:700;font-size:13px;letter-spacing:.55px;line-height:27px;text-align:center">Outfit</div>
<div class="abs" style="left:358px;top:463px;width:139px;height:29px;border-radius:8px;background:#fff;border:1.5px solid #2a2a2a;color:#111;font-weight:700;font-size:13.5px;letter-spacing:.5px;line-height:29.500px;text-align:center">Avatar</div>
<div class="t" style="left:119px;top:530px;width:80px;text-align:center;font-size:11px;letter-spacing:0;color:#7d7d7d">Shape</div>
<div class="t" style="left:184px;top:530px;width:80px;text-align:center;font-size:11px;letter-spacing:0;color:#b6b6b6">Skin Color</div>
<div class="t" style="left:249px;top:530px;width:80px;text-align:center;font-size:11px;letter-spacing:0;color:#b6b6b6">Face</div>
<div class="t" style="left:314px;top:530px;width:80px;text-align:center;font-size:11px;letter-spacing:0;color:#b6b6b6">Hair</div>
<div class="t" style="left:379px;top:530px;width:80px;text-align:center;font-size:11px;letter-spacing:0;color:#b6b6b6">Facial Hair</div>
<div class="t" style="left:444px;top:530px;width:80px;text-align:center;font-size:11px;letter-spacing:0;color:#b6b6b6">Makeup</div>
<div class="t" style="left:509px;top:530px;width:80px;text-align:center;font-size:11px;letter-spacing:0;color:#b6b6b6">Tattoos</div>
<svg class="i" style="left:150.5px;top:504px" width="18" height="22" viewBox="0 0 18 22" ><g fill="none" stroke="#222" stroke-width="1.2" stroke-linejoin="round"><circle cx="9" cy="3" r="2.3"/><path d="M1.6 7.2Q.6 7.2 .6 8.2T1.6 9.4L6 9.8V14L4.6 20.4Q4.6 21.4 5.6 21.4T6.8 20.6L9 15.4 11.2 20.6Q11.4 21.4 12.4 21.4T13.4 20.4L12 14V9.8L16.4 9.4Q17.4 9.2 17.4 8.2T16.4 7.2L11 7H7Z"/></g></svg>
<svg class="i" style="left:214.5px;top:507.5px" width="21" height="20" viewBox="0 0 21 20" ><g stroke="#929292" stroke-width="1.25" stroke-linejoin="round"><path d="M2.5 .8 13.4 6.8 9.6 15 .8 10.4 4.4 2" fill="none"/><path d="M1.6 8.6 12.4 9 9.6 15 .8 10.4Z" fill="#929292"/><path d="M16.6 12.2Q18.6 15 18.6 16.2A2 2 0 0 1 14.6 16.2Q14.6 15 16.6 12.2Z" fill="none"/></g></svg>
<svg class="i" style="left:278px;top:507px" width="22" height="21" viewBox="0 0 22 21" ><g fill="none" stroke="#929292" stroke-width="1.25" stroke-linecap="round"><path d="M5 7.6C5 -1.4 17 -1.4 17 7.6C17 12 14.6 15.6 11 15.6S5 12 5 7.6Z"/><path d="M5 6.4Q3.6 6.4 4 8.6T5.6 10.6M17 6.4Q18.4 6.4 18 8.6T16.4 10.6"/><path d="M7.6 14.6V17.2Q4 18.6 .6 19.6M14.4 14.6V17.2Q18 18.6 21.4 19.6"/><path d="M7.8 17.2 11 19.6 14.2 17.2" stroke-width=".9"/></g></svg>
<svg class="i" style="left:345px;top:508px" width="19" height="19" viewBox="0 0 19 19" ><g fill="none" stroke="#929292" stroke-width="1.2" stroke-linecap="round"><circle cx="3.2" cy="3.2" r="2.5"/><circle cx="3.2" cy="15.4" r="2.5"/><path d="M5.2 4.8 17.6 17.4M5.2 13.8 17.6 1.2"/></g></svg>
<svg class="i" style="left:407px;top:507px" width="23" height="20" viewBox="0 0 23 20" ><g fill="none" stroke="#929292" stroke-width="1.25" stroke-linejoin="round"><path d="M11.5 5.4Q9.4 2.4 6.6 3.6 4.2 5 1.4 3.2 .2 2.4 .8 4.6 2.6 9 7 8.6 10 8.2 11.5 6.4 13 8.2 16 8.6 20.4 9 22.2 4.6 22.8 2.4 21.6 3.2 18.8 5 16.4 3.6 13.6 2.4 11.5 5.4Z"/><path d="M7.6 11.6H15.4L11.5 17.8Z"/><path d="M9.6 12.6H13.4L11.5 15.6Z" stroke-width=".8"/></g></svg>
<svg class="i" style="left:473px;top:506px" width="20" height="21" viewBox="0 0 20 21" ><g fill="none" stroke="#929292" stroke-width="1.25" stroke-linecap="round"><path d="M1 19.4 12.2 7.4 13.8 9 2.6 20.8Z"/><path d="M10 9.8 11.6 11.4"/><path d="M14.2 .8V4M17.6 3 15.8 5M19.2 7.2H16.4M17.8 11.4 16.2 9.8M9.6 2.6 11.2 4.4"/></g></svg>
<svg class="i" style="left:539px;top:506px" width="20" height="22" viewBox="0 0 20 22" ><g fill="none" stroke="#929292" stroke-width="1.2" stroke-linecap="round"><circle cx="10" cy="3.4" r="2.6"/><path d="M10 6V20.4M1.4 12.4Q1.4 20.4 10 20.4T18.6 12.4M1.4 12.4 .4 15M1.4 12.4 3.8 14M18.6 12.4 19.6 15M18.6 12.4 16.2 14"/></g></svg>
<div class="abs" style="left:139px;top:551px;width:40px;height:2px;background:#4e50e8"></div>
<div class="abs" style="left:0;top:554px;width:706px;height:1.5px;background:#e1e5ec"></div>
<div class="abs" style="left:9px;top:561px;width:688px;height:30px;border-radius:8px;background:#6c54fb;color:#fff;font-size:13px;letter-spacing:0;line-height:30px;text-align:center">Customize</div>
<svg class="i" style="left:0;top:596px" width="706" height="188" viewBox="0 0 706 188"><path transform="translate(38.97 5.00) scale(0.22082)" d="M237 42C246.6 42 252.6 40.8 261 44C269.4 47.2 273.8 50.4 279 58C284.2 65.6 285.4 73.2 287 82C288.6 90.8 286.2 96 287 102C287.8 108 291.2 106.8 291 112C290.8 117.2 288.8 120.4 286 128C283.2 135.6 282 141.2 277 150C272 158.8 265 164.4 261 172C257 179.6 251.8 182.8 257 188C262.2 193.2 278.6 194 287 198C295.4 202 290.4 195.2 299 208C307.6 220.8 316.8 237.6 330 262C343.2 286.4 353.6 305.4 365 330C376.4 354.6 380 365.4 387 385C394 404.6 399 418.4 400 428C401 437.6 395.2 434.6 392 433C388.8 431.4 387 423 384 420C381 417 379.6 420.4 377 418C374.4 415.6 373.8 413.2 371 408C368.2 402.8 368.2 403.6 363 392C357.8 380.4 354 368.4 345 350C336 331.6 328 317.6 318 300C308 282.4 303.2 272.8 295 262C286.8 251.2 281.6 244.4 277 246C272.4 247.6 273.4 259.2 272 270C270.6 280.8 268 286 270 300C272 314 276.8 323 282.1 340C287.5 357 293.4 363 297 385C300.6 407 298.8 427 300 450C301.2 473 301.2 481 303 500C304.8 519 308.2 525 309 545C309.8 565 306.8 581 307 600C307.2 619 307.6 626.4 310 640C312.4 653.6 313.6 658 319 668C324.4 678 334.4 682.8 337 690C339.6 697.2 340 700.8 332 704C324 707.2 305.6 708.8 297 706C288.4 703.2 291 700.2 289 690C287 679.8 289.4 679 287 655C284.6 631 280.8 595 277 570C273.2 545 272.4 554 268 530C263.6 506 260.6 477.2 255 450C249.4 422.8 244.2 405.2 240 394C235.8 382.8 238.2 382.8 234 394C229.8 405.2 224.6 422.8 219 450C213.4 477.2 210.4 506 206 530C201.6 554 200.8 545 197 570C193.2 595 189.4 631 187 655C184.6 679 187 679.8 185 690C183 700.2 185.6 703.2 177 706C168.4 708.8 150 707.2 142 704C134 700.8 134.4 697.2 137 690C139.6 682.8 149.6 678 155 668C160.4 658 161.6 653.6 164 640C166.4 626.4 166.8 619 167 600C167.2 581 164.2 565 165 545C165.8 525 169.2 519 171 500C172.8 481 172.8 473 174 450C175.2 427 173.4 407 177 385C180.6 363 186.4 357 191.8 340C197.2 323 202 314 204 300C206 286 203.4 280.8 202 270C200.6 259.2 201.6 247.6 197 246C192.4 244.4 187.2 251.2 179 262C170.8 272.8 166 282.4 156 300C146 317.6 138 331.6 129 350C120 368.4 116.2 380.4 111 392C105.8 403.6 105.8 402.8 103 408C100.2 413.2 99.6 415.6 97 418C94.4 420.4 93 417 90 420C87 423 85.2 431.4 82 433C78.8 434.6 73 437.6 74 428C75 418.4 80 404.6 87 385C94 365.4 97.6 354.6 109 330C120.4 305.4 130.8 286.4 144 262C157.2 237.6 166.4 220.8 175 208C183.6 195.2 178.6 202 187 198C195.4 194 211.8 193.2 217 188C222.2 182.8 217 179.6 213 172C209 164.4 202 158.8 197 150C192 141.2 190.8 135.6 188 128C185.2 120.4 183.2 117.2 183 112C182.8 106.8 186.2 108 187 102C187.8 96 185.4 90.8 187 82C188.6 73.2 189.8 65.6 195 58C200.2 50.4 204.6 47.2 213 44C221.4 40.8 227.4 42 237 42Z" fill="#80556a"/><path transform="translate(212.97 5.00) scale(0.22082)" d="M237 42C246.6 42 252.6 40.8 261 44C269.4 47.2 273.8 50.4 279 58C284.2 65.6 285.4 73.2 287 82C288.6 90.8 286.2 96 287 102C287.8 108 291.2 106.8 291 112C290.8 117.2 288.8 120.4 286 128C283.2 135.6 282 141.2 277 150C272 158.8 265 164.4 261 172C257 179.6 251.4 182.8 257 188C262.6 193.2 280.2 194 289 198C297.8 202 292.8 195.2 301 208C309.2 220.8 317.2 237.6 330 262C342.8 286.4 353.6 305.4 365 330C376.4 354.6 380 365.4 387 385C394 404.6 399 418.4 400 428C401 437.6 395.2 434.6 392 433C388.8 431.4 387 423 384 420C381 417 379.6 420.4 377 418C374.4 415.6 373.8 413.2 371 408C368.2 402.8 368.2 403.6 363 392C357.8 380.4 354 368.4 345 350C336 331.6 328 317.6 318 300C308 282.4 302 272.8 295 262C288 251.2 286.2 244.4 283 246C279.8 247.6 280.2 259.2 279 270C277.8 280.8 275.1 286 277 300C278.9 314 283.5 323 288.7 340C293.9 357 299.2 363 303 385C306.8 407 306.4 427 307.6 450C308.8 473 308.5 481 308.8 500C309.1 519 309.4 525 309 545C308.6 565 306.8 581 307 600C307.2 619 307.6 626.4 310 640C312.4 653.6 313.6 658 319 668C324.4 678 334.4 682.8 337 690C339.6 697.2 340 700.8 332 704C324 707.2 305.6 708.8 297 706C288.4 703.2 291 700.2 289 690C287 679.8 289.4 679 287 655C284.6 631 280.8 595 277 570C273.2 545 272.4 554 268 530C263.6 506 260.6 477.2 255 450C249.4 422.8 244.2 405.2 240 394C235.8 382.8 238.2 382.8 234 394C229.8 405.2 224.6 422.8 219 450C213.4 477.2 210.4 506 206 530C201.6 554 200.8 545 197 570C193.2 595 189.4 631 187 655C184.6 679 187 679.8 185 690C183 700.2 185.6 703.2 177 706C168.4 708.8 150 707.2 142 704C134 700.8 134.4 697.2 137 690C139.6 682.8 149.6 678 155 668C160.4 658 161.6 653.6 164 640C166.4 626.4 166.8 619 167 600C167.2 581 165.4 565 165 545C164.6 525 164.9 519 165.2 500C165.5 481 165.2 473 166.4 450C167.6 427 167.2 407 171 385C174.8 363 180.1 357 185.3 340C190.5 323 195.1 314 197 300C198.9 286 196.2 280.8 195 270C193.8 259.2 194.2 247.6 191 246C187.8 244.4 186 251.2 179 262C172 272.8 166 282.4 156 300C146 317.6 138 331.6 129 350C120 368.4 116.2 380.4 111 392C105.8 403.6 105.8 402.8 103 408C100.2 413.2 99.6 415.6 97 418C94.4 420.4 93 417 90 420C87 423 85.2 431.4 82 433C78.8 434.6 73 437.6 74 428C75 418.4 80 404.6 87 385C94 365.4 97.6 354.6 109 330C120.4 305.4 131.2 286.4 144 262C156.8 237.6 164.8 220.8 173 208C181.2 195.2 176.2 202 185 198C193.8 194 211.4 193.2 217 188C222.6 182.8 217 179.6 213 172C209 164.4 202 158.8 197 150C192 141.2 190.8 135.6 188 128C185.2 120.4 183.2 117.2 183 112C182.8 106.8 186.2 108 187 102C187.8 96 185.4 90.8 187 82C188.6 73.2 189.8 65.6 195 58C200.2 50.4 204.6 47.2 213 44C221.4 40.8 227.4 42 237 42Z" fill="#80556a"/><path transform="translate(388.17 5.00) scale(0.22082)" d="M237 42C246.6 42 252.6 40.8 261 44C269.4 47.2 273.8 50.4 279 58C284.2 65.6 285.4 73.2 287 82C288.6 90.8 286.2 96 287 102C287.8 108 291.2 106.8 291 112C290.8 117.2 288.8 120.4 286 128C283.2 135.6 282 141.2 277 150C272 158.8 265 164.4 261 172C257 179.6 250.6 182.8 257 188C263.4 193.2 283.4 194 293 198C302.6 202 296.4 195.2 305 208C313.6 220.8 324 237.6 336 262C348 286.4 354.8 305.4 365 330C375.2 354.6 380 365.4 387 385C394 404.6 399 418.4 400 428C401 437.6 395.2 434.6 392 433C388.8 431.4 387 423 384 420C381 417 379.6 420.4 377 418C374.4 415.6 373.8 413.2 371 408C368.2 402.8 367.6 403.6 363 392C358.4 380.4 355.8 368.4 348 350C340.2 331.6 333.4 317.6 324 300C314.6 282.4 307.2 272.8 301 262C294.8 251.2 295.4 244.4 293 246C290.6 247.6 290.2 259.2 289 270C287.8 280.8 284.5 286 287 300C289.5 314 295 323 301.4 340C307.8 357 313 363 319 385C325 407 329.5 427 331.2 450C332.9 473 330.4 481 327.6 500C324.8 519 319.5 525 317 545C314.5 565 316.4 581 315 600C313.6 619 309.2 626.4 310 640C310.8 653.6 313.6 658 319 668C324.4 678 334.4 682.8 337 690C339.6 697.2 340 700.8 332 704C324 707.2 305.6 708.8 297 706C288.4 703.2 291 700.2 289 690C287 679.8 289.4 679 287 655C284.6 631 280.8 595 277 570C273.2 545 272.4 554 268 530C263.6 506 260.6 477.2 255 450C249.4 422.8 244.2 405.2 240 394C235.8 382.8 238.2 382.8 234 394C229.8 405.2 224.6 422.8 219 450C213.4 477.2 210.4 506 206 530C201.6 554 200.8 545 197 570C193.2 595 189.4 631 187 655C184.6 679 187 679.8 185 690C183 700.2 185.6 703.2 177 706C168.4 708.8 150 707.2 142 704C134 700.8 134.4 697.2 137 690C139.6 682.8 149.6 678 155 668C160.4 658 163.2 653.6 164 640C164.8 626.4 160.4 619 159 600C157.6 581 159.5 565 157 545C154.5 525 149.2 519 146.4 500C143.6 481 141.1 473 142.8 450C144.5 427 149 407 155 385C161 363 166.2 357 172.6 340C179 323 184.5 314 187 300C189.5 286 186.2 280.8 185 270C183.8 259.2 183.4 247.6 181 246C178.6 244.4 179.2 251.2 173 262C166.8 272.8 159.4 282.4 150 300C140.6 317.6 133.8 331.6 126 350C118.2 368.4 115.6 380.4 111 392C106.4 403.6 105.8 402.8 103 408C100.2 413.2 99.6 415.6 97 418C94.4 420.4 93 417 90 420C87 423 85.2 431.4 82 433C78.8 434.6 73 437.6 74 428C75 418.4 80 404.6 87 385C94 365.4 98.8 354.6 109 330C119.2 305.4 126 286.4 138 262C150 237.6 160.4 220.8 169 208C177.6 195.2 171.4 202 181 198C190.6 194 210.6 193.2 217 188C223.4 182.8 217 179.6 213 172C209 164.4 202 158.8 197 150C192 141.2 190.8 135.6 188 128C185.2 120.4 183.2 117.2 183 112C182.8 106.8 186.2 108 187 102C187.8 96 185.4 90.8 187 82C188.6 73.2 189.8 65.6 195 58C200.2 50.4 204.6 47.2 213 44C221.4 40.8 227.4 42 237 42Z" fill="#80556a"/><path transform="translate(562.97 5.00) scale(0.22082)" d="M237 42C246.6 42 252.6 40.8 261 44C269.4 47.2 273.8 50.4 279 58C284.2 65.6 285.4 73.2 287 82C288.6 90.8 286.2 96 287 102C287.8 108 291.2 106.8 291 112C290.8 117.2 288.8 120.4 286 128C283.2 135.6 282 141.2 277 150C272 158.8 265 164.4 261 172C257 179.6 249.4 182.8 257 188C264.6 193.2 288.2 194 299 198C309.8 202 304 195.2 311 208C318 220.8 323.2 234.4 334 262C344.8 289.6 354.4 318.2 365 346C375.6 373.8 380 381.4 387 401C394 420.6 399 434.4 400 444C401 453.6 395.2 450.6 392 449C388.8 447.4 387 439 384 436C381 433 379.6 436.4 377 434C374.4 431.6 373.8 429.2 371 424C368.2 418.8 367.8 420.9 363 408C358.2 395.1 355.2 381.2 347 359.6C338.8 338 331.6 319.5 322 300C312.4 280.5 305.6 272.8 299 262C292.4 251.2 291.8 244.4 289 246C286.2 247.6 286.2 259.2 285 270C283.8 280.8 282.3 286 283 300C283.7 314 286 323 288.4 340C290.8 357 293.3 363 295 385C296.7 407 295.7 427 296.8 450C297.9 473 298 481 300.4 500C302.8 519 307.7 525 309 545C310.3 565 306.8 581 307 600C307.2 619 307.6 626.4 310 640C312.4 653.6 313.6 658 319 668C324.4 678 334.4 682.8 337 690C339.6 697.2 340 700.8 332 704C324 707.2 305.6 708.8 297 706C288.4 703.2 291 700.2 289 690C287 679.8 289.4 679 287 655C284.6 631 280.8 595 277 570C273.2 545 272.4 554 268 530C263.6 506 260.6 477.2 255 450C249.4 422.8 244.2 405.2 240 394C235.8 382.8 238.2 382.8 234 394C229.8 405.2 224.6 422.8 219 450C213.4 477.2 210.4 506 206 530C201.6 554 200.8 545 197 570C193.2 595 189.4 631 187 655C184.6 679 187 679.8 185 690C183 700.2 185.6 703.2 177 706C168.4 708.8 150 707.2 142 704C134 700.8 134.4 697.2 137 690C139.6 682.8 149.6 678 155 668C160.4 658 161.6 653.6 164 640C166.4 626.4 166.8 619 167 600C167.2 581 163.7 565 165 545C166.3 525 171.2 519 173.6 500C176 481 176.1 473 177.2 450C178.3 427 177.3 407 179 385C180.7 363 183.2 357 185.6 340C188 323 190.3 314 191 300C191.7 286 190.2 280.8 189 270C187.8 259.2 187.8 247.6 185 246C182.2 244.4 181.6 251.2 175 262C168.4 272.8 161.6 280.5 152 300C142.4 319.5 135.2 338 127 359.6C118.8 381.2 115.8 395.1 111 408C106.2 420.9 105.8 418.8 103 424C100.2 429.2 99.6 431.6 97 434C94.4 436.4 93 433 90 436C87 439 85.2 447.4 82 449C78.8 450.6 73 453.6 74 444C75 434.4 80 420.6 87 401C94 381.4 98.4 373.8 109 346C119.6 318.2 129.2 289.6 140 262C150.8 234.4 156 220.8 163 208C170 195.2 164.2 202 175 198C185.8 194 209.4 193.2 217 188C224.6 182.8 217 179.6 213 172C209 164.4 202 158.8 197 150C192 141.2 190.8 135.6 188 128C185.2 120.4 183.2 117.2 183 112C182.8 106.8 186.2 108 187 102C187.8 96 185.4 90.8 187 82C188.6 73.2 189.8 65.6 195 58C200.2 50.4 204.6 47.2 213 44C221.4 40.8 227.4 42 237 42Z" fill="#5f4e7b"/></svg>
</div>
</div>
<div class="p" style="left:949px;top:4px;width:319px;height:1226px;border-radius:3px 0 0 0">
<div class="tabbar"></div><div class="tab" style="left:0;width:93px"></div>
<svg class="i" style="left:9px;top:5px" width="10" height="10" viewBox="0 0 10 10" ><circle cx="5" cy="5" r="5" fill="#b4b4b4"/><rect x="4.1" y="4.2" width="1.9" height="3.8" fill="#303030"/><rect x="4.1" y="1.9" width="1.9" height="1.6" fill="#303030"/></svg>
<div class="t " style="left:24px;top:2px;color:#b4b4b4;letter-spacing:0.07px;">Inspector</div>
<svg class="i" style="left:282.5px;top:4px" width="9" height="10" viewBox="0 0 9 10" ><g fill="none" stroke="#b4b4b4" stroke-width="1.1"><rect x=".6" y="5.400" width="7.800" height="4" rx=".8"/><path d="M1.800 3C2.400 .2 6.800 .2 6.800 3.200V5.400"/></g></svg>
<svg class="i" style="left:304px;top:4.2px" width="3" height="10" viewBox="0 0 3 10" ><g fill="#b4b4b4"><rect x="0" y="0" width="2.3" height="2.3"/><rect x="0" y="3.6" width="2.3" height="2.3"/><rect x="0" y="7.200" width="2.3" height="2.3"/></g></svg>
<div class="abs" style="left:0;top:19px;width:306px;height:73px;background:#303030"></div>
<div class="hl" style="left:0;top:92px;width:306px"></div>
<svg class="i" style="left:9px;top:27px" width="30" height="30" viewBox="0 0 30 30" ><g fill="none" stroke-linejoin="round" stroke-linecap="round"><path d="M12.4 1.2 22.2 6.6V14M12.4 1.2 1.6 7V18.6L12.6 24.4" stroke="#56b4dc" stroke-width="1.7"/><path d="M1.8 7 12.6 12.6 22 6.8M12.6 12.6V24" stroke="#56b4dc" stroke-width="1.7"/><path d="M19.4 14.4Q17.4 14.4 17.4 16.2V19.2Q17.4 20.8 15.6 21.2 17.4 21.6 17.4 23.2V26.2Q17.4 28 19.4 28M24.4 14.4Q26.4 14.4 26.4 16.2V19.2Q26.4 20.8 28.2 21.2 26.4 21.6 26.4 23.2V26.2Q26.4 28 24.4 28" stroke="#e0542c" stroke-width="1.7"/></g></svg>
<div class="t " style="left:46px;top:24px;font-size:13.5px;color:#999;letter-spacing:0.11px;">Example Profile (Local Avatar Dat</div>
<svg class="i" style="left:261px;top:27px" width="10" height="10" viewBox="0 0 10 10" ><circle cx="5" cy="5" r="5" fill="#b4b4b4"/><path d="M3.4 3.8Q3.4 2.2 5 2.2T6.7 3.7Q6.7 4.6 5.8 5.1 5 5.5 5 6.3" fill="none" stroke="#303030" stroke-width="1.3"/><rect x="4.3" y="7.2" width="1.4" height="1.3" fill="#303030"/></svg>
<svg class="i" style="left:277px;top:27px" width="11" height="10" viewBox="0 0 11 10" ><path d="M0 2.400H5.600M9 2.400H11M0 7.400H2.200M5.800 7.400H11" stroke="#b4b4b4" stroke-width="1.100"/><path d="M7.300 0V4.800M4 5V10" stroke="#b4b4b4" stroke-width="1.500"/></svg>
<svg class="i" style="left:297.3px;top:27.4px" width="3" height="10" viewBox="0 0 3 10" ><g fill="#b4b4b4"><rect x="0" y="0" width="2.3" height="2.3"/><rect x="0" y="3.6" width="2.3" height="2.3"/><rect x="0" y="7.200" width="2.3" height="2.3"/></g></svg>
<div class="abs" style="left:258px;top:47px;width:43.5px;height:18px;border:1px solid #232323;border-radius:3px;background:#464646;color:#c4c4c4;text-align:center;line-height:16px;font-size:12px">Open</div>
<div class="abs" style="left:3px;top:70px;width:14px;height:14px;border:1px solid #1a1a1a;border-radius:3px;background:#222"></div>
<div class="t " style="left:20.5px;top:69px;color:#b4b4b4;letter-spacing:-0.15px;">Addressable</div>
<div class="abs" style="left:306px;top:19px;width:13px;height:1190px;background:#2a2a2a"></div>
<svg class="i" style="left:309px;top:24.5px" width="8" height="5" viewBox="0 0 8 5" ><path d="M0 5H8L4 0Z" fill="#a8a8a8"/></svg>
<div class="abs" style="left:308px;top:36px;width:10px;height:936px;border-radius:5px;background:#4a4a4a"></div>
<svg class="i" style="left:309px;top:1199px" width="8" height="5" viewBox="0 0 8 5" ><path d="M0 0H8L4 5Z" fill="#a8a8a8"/></svg>
<div class="t " style="left:19.5px;top:98px;color:#5c5c5c;letter-spacing:-0.09px;">Script</div>
<div class="t " style="left:1.5px;top:93px;color:#b4b4b4;letter-spacing:-0.06px;">Headshot Path</div>
<div class="abs" style="left:140px;top:96px;width:162px;height:18px;border:1px solid #242424;border-radius:3px;background:#2a2a2a"></div>
<svg class="i" style="left:144px;top:100px" width="10" height="11" viewBox="0 0 10 11" ><path d="M.5 .5H6.6L9.5 3.4V10.5H.5Z" fill="#4c564c" stroke="#5a645a" stroke-width=".8"/><path d="M3 7 5 4.2 7 7Z" fill="#3e6a3e"/></svg>
<div class="t " style="left:156px;top:97px;color:#6a6a6a;letter-spacing:0.13px;">LocalAvatarData</div>
<svg class="i" style="left:287px;top:100px" width="10" height="10" viewBox="0 0 10 10" ><circle cx="5" cy="5" r="4.4" fill="none" stroke="#8a8a8a" stroke-width="1"/><circle cx="5" cy="5" r="1.4" fill="#8a8a8a"/></svg>
<div class="abs" style="left:284px;top:97px;width:1px;height:16px;background:#2d2d2d"></div>
<svg class="i" style="left:7px;top:121px" width="8" height="9" viewBox="0 0 8 9" ><path d="M0 0V9L8 4.5Z" fill="#6a6a6a"/></svg>
<div class="t " style="left:20px;top:117px;font-weight:700;color:#b4b4b4;letter-spacing:-0.09px;">Equipped Asset Ids</div>
<div class="fld" style="left:254px;top:116px;width:48px">9</div>
<svg class="i" style="left:7px;top:141.5px" width="9" height="8" viewBox="0 0 9 8" ><path d="M0 0H9L4.5 8Z" fill="#6a6a6a"/></svg>
<div class="t " style="left:19px;top:137px;color:#b4b4b4;letter-spacing:0.03px;">Serialized Colors</div>
<svg class="i" style="left:20.6px;top:161.5px" width="9" height="8" viewBox="0 0 9 8" ><path d="M0 0H9L4.5 8Z" fill="#6a6a6a"/></svg>
<div class="t " style="left:35px;top:157px;font-weight:700;color:#b4b4b4;letter-spacing:0;">Keys</div>
<div class="fld" style="left:254px;top:156px;width:48px">14</div>
<div class="abs" style="left:33px;top:177px;width:269px;height:287px;border:1px solid #1f1f1f;border-radius:3px;background:#2f2f2f"></div>
<div class="abs" style="left:39px;top:188px;width:10px;height:4px;border-top:1px solid #4e4e4e;border-bottom:1px solid #4e4e4e"></div>
<div class="t " style="left:63px;top:182px;color:#a8a8a8;letter-spacing:-0.16px;">Element 0</div>
<div class="fld" style="left:127px;top:181px;width:168px">gear-eyebrowsBase</div>
<div class="abs" style="left:39px;top:208px;width:10px;height:4px;border-top:1px solid #4e4e4e;border-bottom:1px solid #4e4e4e"></div>
<div class="t " style="left:63px;top:202px;color:#a8a8a8;letter-spacing:-0.16px;">Element 1</div>
<div class="fld" style="left:127px;top:201px;width:168px">gear-eyebrowsR</div>
<div class="abs" style="left:39px;top:228px;width:10px;height:4px;border-top:1px solid #4e4e4e;border-bottom:1px solid #4e4e4e"></div>
<div class="t " style="left:63px;top:222px;color:#a8a8a8;letter-spacing:-0.16px;">Element 2</div>
<div class="fld" style="left:127px;top:221px;width:168px">gear-eyelashesBase</div>
<div class="abs" style="left:39px;top:248px;width:10px;height:4px;border-top:1px solid #4e4e4e;border-bottom:1px solid #4e4e4e"></div>
<div class="t " style="left:63px;top:242px;color:#a8a8a8;letter-spacing:-0.16px;">Element 3</div>
<div class="fld" style="left:127px;top:241px;width:168px">gear-eyelashesG</div>
<div class="abs" style="left:39px;top:268px;width:10px;height:4px;border-top:1px solid #4e4e4e;border-bottom:1px solid #4e4e4e"></div>
<div class="t " style="left:63px;top:262px;color:#a8a8a8;letter-spacing:-0.16px;">Element 4</div>
<div class="fld" style="left:127px;top:261px;width:168px">gear-eyebrowsG</div>
<div class="abs" style="left:39px;top:288px;width:10px;height:4px;border-top:1px solid #4e4e4e;border-bottom:1px solid #4e4e4e"></div>
<div class="t " style="left:63px;top:282px;color:#a8a8a8;letter-spacing:-0.16px;">Element 5</div>
<div class="fld" style="left:127px;top:281px;width:168px">gear-hairG</div>
<div class="abs" style="left:39px;top:308px;width:10px;height:4px;border-top:1px solid #4e4e4e;border-bottom:1px solid #4e4e4e"></div>
<div class="t " style="left:63px;top:302px;color:#a8a8a8;letter-spacing:-0.16px;">Element 6</div>
<div class="fld" style="left:127px;top:301px;width:168px">gear-eyelashesR</div>
<div class="abs" style="left:39px;top:328px;width:10px;height:4px;border-top:1px solid #4e4e4e;border-bottom:1px solid #4e4e4e"></div>
<div class="t " style="left:63px;top:322px;color:#a8a8a8;letter-spacing:-0.16px;">Element 7</div>
<div class="fld" style="left:127px;top:321px;width:168px">gear-eyelashesB</div>
<div class="abs" style="left:39px;top:348px;width:10px;height:4px;border-top:1px solid #4e4e4e;border-bottom:1px solid #4e4e4e"></div>
<div class="t " style="left:63px;top:342px;color:#a8a8a8;letter-spacing:-0.16px;">Element 8</div>
<div class="fld" style="left:127px;top:341px;width:168px">gear-eyebrowsB</div>
<div class="abs" style="left:39px;top:368px;width:10px;height:4px;border-top:1px solid #4e4e4e;border-bottom:1px solid #4e4e4e"></div>
<div class="t " style="left:63px;top:362px;color:#a8a8a8;letter-spacing:-0.16px;">Element 9</div>
<div class="fld" style="left:127px;top:361px;width:168px">gear-hairBase</div>
<div class="abs" style="left:39px;top:388px;width:10px;height:4px;border-top:1px solid #4e4e4e;border-bottom:1px solid #4e4e4e"></div>
<div class="t " style="left:63px;top:382px;color:#a8a8a8;letter-spacing:-0.19px;">Element 10</div>
<div class="fld" style="left:127px;top:381px;width:168px">unified-freckles</div>
<div class="abs" style="left:39px;top:408px;width:10px;height:4px;border-top:1px solid #4e4e4e;border-bottom:1px solid #4e4e4e"></div>
<div class="t " style="left:63px;top:402px;color:#a8a8a8;letter-spacing:-0.09px;">Element 11</div>
<div class="fld" style="left:127px;top:401px;width:168px">gear-hairB</div>
<div class="abs" style="left:39px;top:428px;width:10px;height:4px;border-top:1px solid #4e4e4e;border-bottom:1px solid #4e4e4e"></div>
<div class="t " style="left:63px;top:422px;color:#a8a8a8;letter-spacing:-0.19px;">Element 12</div>
<div class="fld" style="left:127px;top:421px;width:168px">gear-hairR</div>
<div class="abs" style="left:39px;top:448px;width:10px;height:4px;border-top:1px solid #4e4e4e;border-bottom:1px solid #4e4e4e"></div>
<div class="t " style="left:63px;top:442px;color:#a8a8a8;letter-spacing:-0.19px;">Element 13</div>
<div class="fld" style="left:127px;top:441px;width:168px">unified-skin</div>
<div class="abs" style="left:234.5px;top:463px;width:57px;height:19px;border:1px solid #1f1f1f;border-top:none;border-radius:0 0 4px 4px;background:#2f2f2f"></div>
<svg class="i" style="left:245px;top:467px" width="10" height="10" viewBox="0 0 10 10" ><path d="M5 .5V9.5M.5 5H9.5" stroke="#b8b8b8" stroke-width="1.5"/></svg>
<svg class="i" style="left:271px;top:471px" width="8" height="2" viewBox="0 0 8 2" ><path d="M0 1H8" stroke="#b8b8b8" stroke-width="1.5"/></svg>
<svg class="i" style="left:20.6px;top:491.5px" width="9" height="8" viewBox="0 0 9 8" ><path d="M0 0H9L4.5 8Z" fill="#6a6a6a"/></svg>
<div class="t " style="left:35px;top:487px;font-weight:700;color:#b4b4b4;letter-spacing:0;">Values</div>
<div class="fld" style="left:254px;top:486px;width:48px">14</div>
<div class="abs" style="left:33px;top:507px;width:269px;height:287px;border:1px solid #1f1f1f;border-radius:3px;background:#2f2f2f"></div>
<div class="abs" style="left:39px;top:518px;width:10px;height:4px;border-top:1px solid #4e4e4e;border-bottom:1px solid #4e4e4e"></div>
<div class="t " style="left:63px;top:512px;color:#a8a8a8;letter-spacing:-0.16px;">Element 0</div>
<div class="abs" style="left:127px;top:511px;width:168px;height:18px;border:1px solid #171717;border-radius:3px;background:#353535;overflow:hidden"><div class="abs" style="left:0;top:0;width:148px;height:13px;background:#30170a"></div><div class="abs" style="left:0;top:13px;width:148px;height:3px;background:#fff"></div></div>
<svg class="i" style="left:280px;top:514px" width="13" height="12" viewBox="0 0 13 12" ><g transform="rotate(45 6.5 6)"><rect x="5.2" y="-1.2" width="2.6" height="3.4" rx=".8" fill="#b4b4b4"/><rect x="3.6" y="2.2" width="5.8" height="1.7" fill="#b4b4b4"/><path d="M5.1 4.2H7.9V9.6L6.5 11.8 5.1 9.6Z" fill="none" stroke="#b4b4b4" stroke-width="1"/></g></svg>
<div class="abs" style="left:39px;top:538px;width:10px;height:4px;border-top:1px solid #4e4e4e;border-bottom:1px solid #4e4e4e"></div>
<div class="t " style="left:63px;top:532px;color:#a8a8a8;letter-spacing:-0.16px;">Element 1</div>
<div class="abs" style="left:127px;top:531px;width:168px;height:18px;border:1px solid #171717;border-radius:3px;background:#353535;overflow:hidden"><div class="abs" style="left:0;top:0;width:148px;height:13px;background:#30170a"></div><div class="abs" style="left:0;top:13px;width:148px;height:3px;background:#fff"></div></div>
<svg class="i" style="left:280px;top:534px" width="13" height="12" viewBox="0 0 13 12" ><g transform="rotate(45 6.5 6)"><rect x="5.2" y="-1.2" width="2.6" height="3.4" rx=".8" fill="#b4b4b4"/><rect x="3.6" y="2.2" width="5.8" height="1.7" fill="#b4b4b4"/><path d="M5.1 4.2H7.9V9.6L6.5 11.8 5.1 9.6Z" fill="none" stroke="#b4b4b4" stroke-width="1"/></g></svg>
<div class="abs" style="left:39px;top:558px;width:10px;height:4px;border-top:1px solid #4e4e4e;border-bottom:1px solid #4e4e4e"></div>
<div class="t " style="left:63px;top:552px;color:#a8a8a8;letter-spacing:-0.16px;">Element 2</div>
<div class="abs" style="left:127px;top:551px;width:168px;height:18px;border:1px solid #171717;border-radius:3px;background:#353535;overflow:hidden"><div class="abs" style="left:0;top:0;width:148px;height:13px;background:#30170a"></div><div class="abs" style="left:0;top:13px;width:148px;height:3px;background:#fff"></div></div>
<svg class="i" style="left:280px;top:554px" width="13" height="12" viewBox="0 0 13 12" ><g transform="rotate(45 6.5 6)"><rect x="5.2" y="-1.2" width="2.6" height="3.4" rx=".8" fill="#b4b4b4"/><rect x="3.6" y="2.2" width="5.8" height="1.7" fill="#b4b4b4"/><path d="M5.1 4.2H7.9V9.6L6.5 11.8 5.1 9.6Z" fill="none" stroke="#b4b4b4" stroke-width="1"/></g></svg>
<div class="abs" style="left:39px;top:578px;width:10px;height:4px;border-top:1px solid #4e4e4e;border-bottom:1px solid #4e4e4e"></div>
<div class="t " style="left:63px;top:572px;color:#a8a8a8;letter-spacing:-0.16px;">Element 3</div>
<div class="abs" style="left:127px;top:571px;width:168px;height:18px;border:1px solid #171717;border-radius:3px;background:#353535;overflow:hidden"><div class="abs" style="left:0;top:0;width:148px;height:13px;background:#30170a"></div><div class="abs" style="left:0;top:13px;width:148px;height:3px;background:#fff"></div></div>
<svg class="i" style="left:280px;top:574px" width="13" height="12" viewBox="0 0 13 12" ><g transform="rotate(45 6.5 6)"><rect x="5.2" y="-1.2" width="2.6" height="3.4" rx=".8" fill="#b4b4b4"/><rect x="3.6" y="2.2" width="5.8" height="1.7" fill="#b4b4b4"/><path d="M5.1 4.2H7.9V9.6L6.5 11.8 5.1 9.6Z" fill="none" stroke="#b4b4b4" stroke-width="1"/></g></svg>
<div class="abs" style="left:39px;top:598px;width:10px;height:4px;border-top:1px solid #4e4e4e;border-bottom:1px solid #4e4e4e"></div>
<div class="t " style="left:63px;top:592px;color:#a8a8a8;letter-spacing:-0.16px;">Element 4</div>
<div class="abs" style="left:127px;top:591px;width:168px;height:18px;border:1px solid #171717;border-radius:3px;background:#353535;overflow:hidden"><div class="abs" style="left:0;top:0;width:148px;height:13px;background:#30170a"></div><div class="abs" style="left:0;top:13px;width:148px;height:3px;background:#fff"></div></div>
<svg class="i" style="left:280px;top:594px" width="13" height="12" viewBox="0 0 13 12" ><g transform="rotate(45 6.5 6)"><rect x="5.2" y="-1.2" width="2.6" height="3.4" rx=".8" fill="#b4b4b4"/><rect x="3.6" y="2.2" width="5.8" height="1.7" fill="#b4b4b4"/><path d="M5.1 4.2H7.9V9.6L6.5 11.8 5.1 9.6Z" fill="none" stroke="#b4b4b4" stroke-width="1"/></g></svg>
<div class="abs" style="left:39px;top:618px;width:10px;height:4px;border-top:1px solid #4e4e4e;border-bottom:1px solid #4e4e4e"></div>
<div class="t " style="left:63px;top:612px;color:#a8a8a8;letter-spacing:-0.16px;">Element 5</div>
<div class="abs" style="left:127px;top:611px;width:168px;height:18px;border:1px solid #171717;border-radius:3px;background:#353535;overflow:hidden"><div class="abs" style="left:0;top:0;width:148px;height:13px;background:#bbf536"></div><div class="abs" style="left:0;top:13px;width:148px;height:3px;background:#fff"></div></div>
<svg class="i" style="left:280px;top:614px" width="13" height="12" viewBox="0 0 13 12" ><g transform="rotate(45 6.5 6)"><rect x="5.2" y="-1.2" width="2.6" height="3.4" rx=".8" fill="#b4b4b4"/><rect x="3.6" y="2.2" width="5.8" height="1.7" fill="#b4b4b4"/><path d="M5.1 4.2H7.9V9.6L6.5 11.8 5.1 9.6Z" fill="none" stroke="#b4b4b4" stroke-width="1"/></g></svg>
<div class="abs" style="left:39px;top:638px;width:10px;height:4px;border-top:1px solid #4e4e4e;border-bottom:1px solid #4e4e4e"></div>
<div class="t " style="left:63px;top:632px;color:#a8a8a8;letter-spacing:-0.16px;">Element 6</div>
<div class="abs" style="left:127px;top:631px;width:168px;height:18px;border:1px solid #171717;border-radius:3px;background:#353535;overflow:hidden"><div class="abs" style="left:0;top:0;width:148px;height:13px;background:#30170a"></div><div class="abs" style="left:0;top:13px;width:148px;height:3px;background:#fff"></div></div>
<svg class="i" style="left:280px;top:634px" width="13" height="12" viewBox="0 0 13 12" ><g transform="rotate(45 6.5 6)"><rect x="5.2" y="-1.2" width="2.6" height="3.4" rx=".8" fill="#b4b4b4"/><rect x="3.6" y="2.2" width="5.8" height="1.7" fill="#b4b4b4"/><path d="M5.1 4.2H7.9V9.6L6.5 11.8 5.1 9.6Z" fill="none" stroke="#b4b4b4" stroke-width="1"/></g></svg>
<div class="abs" style="left:39px;top:658px;width:10px;height:4px;border-top:1px solid #4e4e4e;border-bottom:1px solid #4e4e4e"></div>
<div class="t " style="left:63px;top:652px;color:#a8a8a8;letter-spacing:-0.16px;">Element 7</div>
<div class="abs" style="left:127px;top:651px;width:168px;height:18px;border:1px solid #171717;border-radius:3px;background:#353535;overflow:hidden"><div class="abs" style="left:0;top:0;width:148px;height:13px;background:#30170a"></div><div class="abs" style="left:0;top:13px;width:148px;height:3px;background:#fff"></div></div>
<svg class="i" style="left:280px;top:654px" width="13" height="12" viewBox="0 0 13 12" ><g transform="rotate(45 6.5 6)"><rect x="5.2" y="-1.2" width="2.6" height="3.4" rx=".8" fill="#b4b4b4"/><rect x="3.6" y="2.2" width="5.8" height="1.7" fill="#b4b4b4"/><path d="M5.1 4.2H7.9V9.6L6.5 11.8 5.1 9.6Z" fill="none" stroke="#b4b4b4" stroke-width="1"/></g></svg>
<div class="abs" style="left:39px;top:678px;width:10px;height:4px;border-top:1px solid #4e4e4e;border-bottom:1px solid #4e4e4e"></div>
<div class="t " style="left:63px;top:672px;color:#a8a8a8;letter-spacing:-0.16px;">Element 8</div>
<div class="abs" style="left:127px;top:671px;width:168px;height:18px;border:1px solid #171717;border-radius:3px;background:#353535;overflow:hidden"><div class="abs" style="left:0;top:0;width:148px;height:13px;background:#30170a"></div><div class="abs" style="left:0;top:13px;width:148px;height:3px;background:#fff"></div></div>
<svg class="i" style="left:280px;top:674px" width="13" height="12" viewBox="0 0 13 12" ><g transform="rotate(45 6.5 6)"><rect x="5.2" y="-1.2" width="2.6" height="3.4" rx=".8" fill="#b4b4b4"/><rect x="3.6" y="2.2" width="5.8" height="1.7" fill="#b4b4b4"/><path d="M5.1 4.2H7.9V9.6L6.5 11.8 5.1 9.6Z" fill="none" stroke="#b4b4b4" stroke-width="1"/></g></svg>
<div class="abs" style="left:39px;top:698px;width:10px;height:4px;border-top:1px solid #4e4e4e;border-bottom:1px solid #4e4e4e"></div>
<div class="t " style="left:63px;top:692px;color:#a8a8a8;letter-spacing:-0.16px;">Element 9</div>
<div class="abs" style="left:127px;top:691px;width:168px;height:18px;border:1px solid #171717;border-radius:3px;background:#353535;overflow:hidden"><div class="abs" style="left:0;top:0;width:148px;height:13px;background:#96f534"></div><div class="abs" style="left:0;top:13px;width:148px;height:3px;background:#fff"></div></div>
<svg class="i" style="left:280px;top:694px" width="13" height="12" viewBox="0 0 13 12" ><g transform="rotate(45 6.5 6)"><rect x="5.2" y="-1.2" width="2.6" height="3.4" rx=".8" fill="#b4b4b4"/><rect x="3.6" y="2.2" width="5.8" height="1.7" fill="#b4b4b4"/><path d="M5.1 4.2H7.9V9.6L6.5 11.8 5.1 9.6Z" fill="none" stroke="#b4b4b4" stroke-width="1"/></g></svg>
<div class="abs" style="left:39px;top:718px;width:10px;height:4px;border-top:1px solid #4e4e4e;border-bottom:1px solid #4e4e4e"></div>
<div class="t " style="left:63px;top:712px;color:#a8a8a8;letter-spacing:-0.19px;">Element 10</div>
<div class="abs" style="left:127px;top:711px;width:168px;height:18px;border:1px solid #171717;border-radius:3px;background:#353535;overflow:hidden"><div class="abs" style="left:0;top:0;width:148px;height:13px;background:#283595"></div><div class="abs" style="left:0;top:13px;width:148px;height:3px;background:#fff"></div></div>
<svg class="i" style="left:280px;top:714px" width="13" height="12" viewBox="0 0 13 12" ><g transform="rotate(45 6.5 6)"><rect x="5.2" y="-1.2" width="2.6" height="3.4" rx=".8" fill="#b4b4b4"/><rect x="3.6" y="2.2" width="5.8" height="1.7" fill="#b4b4b4"/><path d="M5.1 4.2H7.9V9.6L6.5 11.8 5.1 9.6Z" fill="none" stroke="#b4b4b4" stroke-width="1"/></g></svg>
<div class="abs" style="left:39px;top:738px;width:10px;height:4px;border-top:1px solid #4e4e4e;border-bottom:1px solid #4e4e4e"></div>
<div class="t " style="left:63px;top:732px;color:#a8a8a8;letter-spacing:-0.09px;">Element 11</div>
<div class="abs" style="left:127px;top:731px;width:168px;height:18px;border:1px solid #171717;border-radius:3px;background:#353535;overflow:hidden"><div class="abs" style="left:0;top:0;width:148px;height:13px;background:#8cf534"></div><div class="abs" style="left:0;top:13px;width:148px;height:3px;background:#fff"></div></div>
<svg class="i" style="left:280px;top:734px" width="13" height="12" viewBox="0 0 13 12" ><g transform="rotate(45 6.5 6)"><rect x="5.2" y="-1.2" width="2.6" height="3.4" rx=".8" fill="#b4b4b4"/><rect x="3.6" y="2.2" width="5.8" height="1.7" fill="#b4b4b4"/><path d="M5.1 4.2H7.9V9.6L6.5 11.8 5.1 9.6Z" fill="none" stroke="#b4b4b4" stroke-width="1"/></g></svg>
<div class="abs" style="left:39px;top:758px;width:10px;height:4px;border-top:1px solid #4e4e4e;border-bottom:1px solid #4e4e4e"></div>
<div class="t " style="left:63px;top:752px;color:#a8a8a8;letter-spacing:-0.19px;">Element 12</div>
<div class="abs" style="left:127px;top:751px;width:168px;height:18px;border:1px solid #171717;border-radius:3px;background:#353535;overflow:hidden"><div class="abs" style="left:0;top:0;width:148px;height:13px;background:#aef535"></div><div class="abs" style="left:0;top:13px;width:148px;height:3px;background:#fff"></div></div>
<svg class="i" style="left:280px;top:754px" width="13" height="12" viewBox="0 0 13 12" ><g transform="rotate(45 6.5 6)"><rect x="5.2" y="-1.2" width="2.6" height="3.4" rx=".8" fill="#b4b4b4"/><rect x="3.6" y="2.2" width="5.8" height="1.7" fill="#b4b4b4"/><path d="M5.1 4.2H7.9V9.6L6.5 11.8 5.1 9.6Z" fill="none" stroke="#b4b4b4" stroke-width="1"/></g></svg>
<div class="abs" style="left:39px;top:778px;width:10px;height:4px;border-top:1px solid #4e4e4e;border-bottom:1px solid #4e4e4e"></div>
<div class="t " style="left:63px;top:772px;color:#a8a8a8;letter-spacing:-0.19px;">Element 13</div>
<div class="abs" style="left:127px;top:771px;width:168px;height:18px;border:1px solid #171717;border-radius:3px;background:#353535;overflow:hidden"><div class="abs" style="left:0;top:0;width:148px;height:13px;background:#f0d2b8"></div><div class="abs" style="left:0;top:13px;width:148px;height:3px;background:#fff"></div></div>
<svg class="i" style="left:280px;top:774px" width="13" height="12" viewBox="0 0 13 12" ><g transform="rotate(45 6.5 6)"><rect x="5.2" y="-1.2" width="2.6" height="3.4" rx=".8" fill="#b4b4b4"/><rect x="3.6" y="2.2" width="5.8" height="1.7" fill="#b4b4b4"/><path d="M5.1 4.2H7.9V9.6L6.5 11.8 5.1 9.6Z" fill="none" stroke="#b4b4b4" stroke-width="1"/></g></svg>
<div class="abs" style="left:234.5px;top:793px;width:57px;height:19px;border:1px solid #1f1f1f;border-top:none;border-radius:0 0 4px 4px;background:#2f2f2f"></div>
<svg class="i" style="left:245px;top:797px" width="10" height="10" viewBox="0 0 10 10" ><path d="M5 .5V9.5M.5 5H9.5" stroke="#b8b8b8" stroke-width="1.5"/></svg>
<svg class="i" style="left:271px;top:801px" width="8" height="2" viewBox="0 0 8 2" ><path d="M0 1H8" stroke="#b8b8b8" stroke-width="1.5"/></svg>
<svg class="i" style="left:7px;top:821.5px" width="9" height="8" viewBox="0 0 9 8" ><path d="M0 0H9L4.5 8Z" fill="#6a6a6a"/></svg>
<div class="t " style="left:19px;top:817px;color:#b4b4b4;letter-spacing:0.10px;">Serialized Body Attributes</div>
<svg class="i" style="left:20.6px;top:841.5px" width="9" height="8" viewBox="0 0 9 8" ><path d="M0 0H9L4.5 8Z" fill="#6a6a6a"/></svg>
<div class="t " style="left:35px;top:837px;font-weight:700;color:#b4b4b4;letter-spacing:0;">Keys</div>
<div class="fld" style="left:254px;top:836px;width:48px">11</div>
<div class="abs" style="left:33px;top:857px;width:269px;height:227px;border:1px solid #1f1f1f;border-radius:3px;background:#2f2f2f"></div>
<div class="abs" style="left:39px;top:868px;width:10px;height:4px;border-top:1px solid #4e4e4e;border-bottom:1px solid #4e4e4e"></div>
<div class="t " style="left:63px;top:862px;color:#a8a8a8;letter-spacing:-0.16px;">Element 0</div>
<div class="fld" style="left:127px;top:861px;width:168px">WeightLowerTorso</div>
<div class="abs" style="left:39px;top:888px;width:10px;height:4px;border-top:1px solid #4e4e4e;border-bottom:1px solid #4e4e4e"></div>
<div class="t " style="left:63px;top:882px;color:#a8a8a8;letter-spacing:-0.16px;">Element 1</div>
<div class="fld" style="left:127px;top:881px;width:168px">Waist</div>
<div class="abs" style="left:39px;top:908px;width:10px;height:4px;border-top:1px solid #4e4e4e;border-bottom:1px solid #4e4e4e"></div>
<div class="t " style="left:63px;top:902px;color:#a8a8a8;letter-spacing:-0.16px;">Element 2</div>
<div class="fld" style="left:127px;top:901px;width:168px">WeightArms</div>
<div class="abs" style="left:39px;top:928px;width:10px;height:4px;border-top:1px solid #4e4e4e;border-bottom:1px solid #4e4e4e"></div>
<div class="t " style="left:63px;top:922px;color:#a8a8a8;letter-spacing:-0.16px;">Element 3</div>
<div class="fld" style="left:127px;top:921px;width:168px">WeightHeadNeck</div>
<div class="abs" style="left:39px;top:948px;width:10px;height:4px;border-top:1px solid #4e4e4e;border-bottom:1px solid #4e4e4e"></div>
<div class="t " style="left:63px;top:942px;color:#a8a8a8;letter-spacing:-0.16px;">Element 4</div>
<div class="fld" style="left:127px;top:941px;width:168px">ShoulderSize</div>
<div class="abs" style="left:39px;top:968px;width:10px;height:4px;border-top:1px solid #4e4e4e;border-bottom:1px solid #4e4e4e"></div>
<div class="t " style="left:63px;top:962px;color:#a8a8a8;letter-spacing:-0.16px;">Element 5</div>
<div class="fld" style="left:127px;top:961px;width:168px">HipSize</div>
<div class="abs" style="left:39px;top:988px;width:10px;height:4px;border-top:1px solid #4e4e4e;border-bottom:1px solid #4e4e4e"></div>
<div class="t " style="left:63px;top:982px;color:#a8a8a8;letter-spacing:-0.16px;">Element 6</div>
<div class="fld" style="left:127px;top:981px;width:168px">WeightLegs</div>
<div class="abs" style="left:39px;top:1008px;width:10px;height:4px;border-top:1px solid #4e4e4e;border-bottom:1px solid #4e4e4e"></div>
<div class="t " style="left:63px;top:1002px;color:#a8a8a8;letter-spacing:-0.16px;">Element 7</div>
<div class="fld" style="left:127px;top:1001px;width:168px">WeightUpperTorso</div>
<div class="abs" style="left:39px;top:1028px;width:10px;height:4px;border-top:1px solid #4e4e4e;border-bottom:1px solid #4e4e4e"></div>
<div class="t " style="left:63px;top:1022px;color:#a8a8a8;letter-spacing:-0.16px;">Element 8</div>
<div class="fld" style="left:127px;top:1021px;width:168px">BrowThickness</div>
<div class="abs" style="left:39px;top:1048px;width:10px;height:4px;border-top:1px solid #4e4e4e;border-bottom:1px solid #4e4e4e"></div>
<div class="t " style="left:63px;top:1042px;color:#a8a8a8;letter-spacing:-0.16px;">Element 9</div>
<div class="fld" style="left:127px;top:1041px;width:168px">Belly</div>
<div class="abs" style="left:39px;top:1068px;width:10px;height:4px;border-top:1px solid #4e4e4e;border-bottom:1px solid #4e4e4e"></div>
<div class="t " style="left:63px;top:1062px;color:#a8a8a8;letter-spacing:-0.19px;">Element 10</div>
<div class="fld" style="left:127px;top:1061px;width:168px">NoseWidth</div>
<div class="abs" style="left:234.5px;top:1083px;width:57px;height:19px;border:1px solid #1f1f1f;border-top:none;border-radius:0 0 4px 4px;background:#2f2f2f"></div>
<svg class="i" style="left:245px;top:1087px" width="10" height="10" viewBox="0 0 10 10" ><path d="M5 .5V9.5M.5 5H9.5" stroke="#b8b8b8" stroke-width="1.5"/></svg>
<svg class="i" style="left:271px;top:1091px" width="8" height="2" viewBox="0 0 8 2" ><path d="M0 1H8" stroke="#b8b8b8" stroke-width="1.5"/></svg>
<svg class="i" style="left:20.6px;top:1111.5px" width="9" height="8" viewBox="0 0 9 8" ><path d="M0 0H9L4.5 8Z" fill="#6a6a6a"/></svg>
<div class="t " style="left:35px;top:1107px;font-weight:700;color:#b4b4b4;letter-spacing:0;">Values</div>
<div class="fld" style="left:254px;top:1106px;width:48px">11</div>
<div class="abs" style="left:33px;top:1127px;width:269px;height:227px;border:1px solid #1f1f1f;border-radius:3px;background:#2f2f2f"></div>
<div class="abs" style="left:39px;top:1138px;width:10px;height:4px;border-top:1px solid #4e4e4e;border-bottom:1px solid #4e4e4e"></div>
<div class="t " style="left:63px;top:1132px;color:#a8a8a8;letter-spacing:-0.16px;">Element 0</div>
<div class="fld" style="left:127px;top:1131px;width:168px;letter-spacing:.3px">0.198498</div>
<div class="abs" style="left:39px;top:1158px;width:10px;height:4px;border-top:1px solid #4e4e4e;border-bottom:1px solid #4e4e4e"></div>
<div class="t " style="left:63px;top:1152px;color:#a8a8a8;letter-spacing:-0.16px;">Element 1</div>
<div class="fld" style="left:127px;top:1151px;width:168px;letter-spacing:.3px">0.5104235</div>
<div class="abs" style="left:39px;top:1178px;width:10px;height:4px;border-top:1px solid #4e4e4e;border-bottom:1px solid #4e4e4e"></div>
<div class="t " style="left:63px;top:1172px;color:#a8a8a8;letter-spacing:-0.16px;">Element 2</div>
<div class="fld" style="left:127px;top:1171px;width:168px;letter-spacing:.3px">0.8053349</div>
<div class="abs" style="left:39px;top:1198px;width:10px;height:4px;border-top:1px solid #4e4e4e;border-bottom:1px solid #4e4e4e"></div>
<div class="t " style="left:63px;top:1192px;color:#a8a8a8;letter-spacing:-0.16px;">Element 3</div>
<div class="fld" style="left:127px;top:1191px;width:168px;letter-spacing:.3px">0.9811474</div>
<div class="abs" style="left:0;top:1209px;width:319px;height:17px;background:#303030;border-top:1px solid #1a1a1a"></div>
<div class="t " style="left:7px;top:1213.5px;font-weight:700;color:#b4b4b4;letter-spacing:-0.10px;">Asset Labels</div>
</div>
<div class="p" style="left:0;top:830px;width:947px;height:400px">
<div class="tabbar"></div><div class="tab" style="left:0;width:70px;border-top:2px solid #2b5b8d;border-radius:0"></div>
<svg class="i" style="left:-4px;top:5px" width="13" height="11" viewBox="0 0 13 11" ><path d="M.5 1.200Q.5 .4 1.300 .4H4.600L6 2H11.600Q12.400 2 12.400 2.800V9.400Q12.400 10.200 11.600 10.200H1.300Q.5 10.200 .5 9.400Z" fill="#b4b4b4"/></svg>
<div class="t " style="left:13px;top:2px;color:#b4b4b4;letter-spacing:0.18px;">Project</div>
<svg class="i" style="left:80px;top:5px" width="11" height="10" viewBox="0 0 11 10" ><rect x="0" y="0" width="11" height="10" rx="1" fill="#b4b4b4"/><path d="M1.6 2.4H9.4M1.6 5H7.4M1.6 7.6H9.4" stroke="#1f1f1f" stroke-width="1.1"/></svg>
<div class="t " style="left:95px;top:2px;color:#b4b4b4;letter-spacing:0.02px;">Console</div>
<svg class="i" style="left:167px;top:5px" width="11" height="10" viewBox="0 0 11 10" ><rect x="0" y="0" width="11" height="2.6" fill="#b4b4b4"/><path d="M.8 3.4H10.2V10H.8Z" fill="#b4b4b4"/><rect x="3.6" y="4.8" width="3.8" height="1.3" fill="#1f1f1f"/></svg>
<div class="t " style="left:183px;top:2px;color:#b4b4b4;letter-spacing:0.11px;">Package Manager</div>
<svg class="i" style="left:912.5px;top:4px" width="9" height="10" viewBox="0 0 9 10" ><g fill="none" stroke="#b4b4b4" stroke-width="1.1"><rect x=".6" y="5.400" width="7.800" height="4" rx=".8"/><path d="M1.800 3C2.400 .2 6.800 .2 6.800 3.200V5.400"/></g></svg>
<svg class="i" style="left:932.6px;top:4.2px" width="3" height="10" viewBox="0 0 3 10" ><g fill="#b4b4b4"><rect x="0" y="0" width="2.3" height="2.3"/><rect x="0" y="3.6" width="2.3" height="2.3"/><rect x="0" y="7.200" width="2.3" height="2.3"/></g></svg>
<div class="tool" style="top:19px"></div>
<div class="hl" style="left:0;top:39px;width:947px"></div>
<svg class="i" style="left:0px;top:23px" width="22" height="12" viewBox="0 0 22 12" ><path d="M2.8 0V12M-3.2 6H8.8" stroke="#b4b4b4" stroke-width="1.5" fill="none"/><path d="M13.2 3.8H20.6L16.9 8.4Z" fill="#b4b4b4"/></svg>
<div class="fld" style="left:482px;top:22px;width:318px;height:15px;border-radius:4px"></div>
<div class="abs" style="left:783px;top:23px;width:16px;height:13px;background:#2e2e2e;border-radius:0 4px 4px 0"></div>
<svg class="i" style="left:487px;top:26px" width="7" height="7" viewBox="0 0 7 7" ><circle cx="2.6" cy="2.6" r="2" fill="none" stroke="#9c9c9c" stroke-width="1"/><path d="M4 4 6.4 6.4" stroke="#9c9c9c" stroke-width="1.1"/></svg>
<svg class="i" style="left:785px;top:24px" width="12" height="11" viewBox="0 0 12 11" ><g fill="none" stroke="#a8a8a8" stroke-width="1"><rect x="3.5" y=".5" width="8" height="7.5" rx="1"/><rect x=".5" y="6.5" width="4" height="4" fill="#2e2e2e"/><path d="M4.5 6.5 9 2.6M6.2 2.4H9.2V5.2"/></g></svg>
<div class="sep" style="left:802px;top:19px;height:20px"></div>
<div class="sep" style="left:828px;top:19px;height:20px"></div>
<div class="sep" style="left:854px;top:19px;height:20px"></div>
<div class="sep" style="left:880px;top:19px;height:20px"></div>
<div class="sep" style="left:906px;top:19px;height:20px"></div>
<svg class="i" style="left:808px;top:22px" width="14" height="13" viewBox="0 0 14 13" ><rect x="2" y="0" width="5.6" height="5.6" fill="#b4b4b4"/><circle cx="3.4" cy="9.4" r="3.4" fill="#b4b4b4"/><path d="M9.4 3.4 12.6 9.4H6.4Z" fill="#b4b4b4"/></svg>
<svg class="i" style="left:834px;top:23px" width="12" height="11" viewBox="0 0 12 11" ><path d="M0 6.2 6.4 .6 11 .2 10.6 4.6 4.4 10.6Z" fill="#b4b4b4"/><circle cx="8.8" cy="2.4" r="1" fill="#303030"/></svg>
<svg class="i" style="left:859.5px;top:22px" width="14" height="14" viewBox="0 0 14 14" ><path d="M4.2 0H9.8L14 4.2V9.8L9.8 14H4.2L0 9.8V4.2Z" fill="#b4b4b4"/><rect x="6.2" y="2.6" width="1.6" height="6" fill="#303030"/><rect x="6.2" y="9.8" width="1.6" height="1.7" fill="#303030"/></svg>
<svg class="i" style="left:886px;top:22px" width="14" height="13" viewBox="0 0 14 13" ><path d="M7 0 8.9 4.6 13.8 5 10 8.2 11.2 13 7 10.4 2.8 13 4 8.2 .2 5 5.1 4.6Z" fill="#7c7c7c"/></svg>
<svg class="i" style="left:911px;top:24px" width="15" height="9" viewBox="0 0 15 9" ><path d="M.4 4.5Q7.500 -3.400 14.600 4.500Q7.500 12.400 .4 4.500Z" fill="none" stroke="#6a6a6a" stroke-width="1"/><circle cx="7.5" cy="4" r="2.6" fill="#6a6a6a"/></svg>
<div class="t " style="left:929px;top:21px;color:#b4b4b4;">55</div>
<div class="abs" style="left:398px;top:40px;width:1px;height:360px;background:#1c1c1c"></div>
<div class="abs" style="left:0;top:199px;width:398px;height:16px;background:#3e3e3e"></div>
<svg class="i" style="left:-5px;top:44px" width="9" height="8" viewBox="0 0 9 8" ><path d="M0 0H9L4.5 8Z" fill="#5e5e5e"/></svg>
<svg class="i" style="left:8px;top:41px" width="13" height="12" viewBox="0 0 13 12" ><path d="M6.5 0 8.3 4.300 12.900 4.600 9.300 7.600 10.500 12 6.500 9.600 2.500 12 3.700 7.600 .1 4.600 4.700 4.300Z" fill="#b4b4b4"/></svg>
<div class="t " style="left:25px;top:39px;font-weight:700;color:#b4b4b4;letter-spacing:-0.20px;">Favorites</div>
<svg class="i" style="left:22px;top:58px" width="13" height="13" viewBox="0 0 13 13" ><circle cx="5" cy="5" r="4.2" fill="none" stroke="#a8a8a8" stroke-width="1.1"/><path d="M8 8 12.2 12.2" stroke="#a8a8a8" stroke-width="1.5"/></svg>
<div class="t " style="left:38px;top:55px;">All Materials</div>
<svg class="i" style="left:22px;top:74px" width="13" height="13" viewBox="0 0 13 13" ><circle cx="5" cy="5" r="4.2" fill="none" stroke="#a8a8a8" stroke-width="1.1"/><path d="M8 8 12.2 12.2" stroke="#a8a8a8" stroke-width="1.5"/></svg>
<div class="t " style="left:38px;top:71px;">All Models</div>
<svg class="i" style="left:22px;top:90px" width="13" height="13" viewBox="0 0 13 13" ><circle cx="5" cy="5" r="4.2" fill="none" stroke="#a8a8a8" stroke-width="1.1"/><path d="M8 8 12.2 12.2" stroke="#a8a8a8" stroke-width="1.5"/></svg>
<div class="t " style="left:38px;top:87px;">All Prefabs</div>
<svg class="i" style="left:-5.5px;top:123.5px" width="9" height="8" viewBox="0 0 9 8" ><path d="M0 0H9L4.5 8Z" fill="#5e5e5e"/></svg>
<svg class="i" style="left:8px;top:122px" width="14" height="11" viewBox="0 0 14 11" ><path d="M.6 1.2Q.6 .4 1.4 .4H4.6L6 2H11Q11.8 2 11.8 2.8V4H3.4L.6 9.6Z" fill="#b4b4b4"/><path d="M3.8 4.8H13.6L10.8 10.6H1Z" fill="#b4b4b4"/><path d="M.9 10.2 3.6 4.4H14" fill="none" stroke="#2d2d2d" stroke-width=".7"/></svg>
<div class="t " style="left:25px;top:118px;font-weight:700;color:#b4b4b4;letter-spacing:0;">Assets</div>
<svg class="i" style="left:8.5px;top:139.5px" width="9" height="8" viewBox="0 0 9 8" ><path d="M0 0H9L4.5 8Z" fill="#5e5e5e"/></svg>
<svg class="i" style="left:22px;top:138px" width="14" height="11" viewBox="0 0 14 11" ><path d="M.6 1.2Q.6 .4 1.4 .4H4.6L6 2H11Q11.8 2 11.8 2.8V4H3.4L.6 9.6Z" fill="#a8a8a8"/><path d="M3.8 4.8H13.6L10.8 10.6H1Z" fill="#a8a8a8"/><path d="M.9 10.2 3.6 4.4H14" fill="none" stroke="#2d2d2d" stroke-width=".7"/></svg>
<div class="t " style="left:38px;top:134px;">Genies</div>
<svg class="i" style="left:22.5px;top:155.5px" width="9" height="8" viewBox="0 0 9 8" ><path d="M0 0H9L4.5 8Z" fill="#5e5e5e"/></svg>
<svg class="i" style="left:36px;top:154px" width="14" height="11" viewBox="0 0 14 11" ><path d="M.6 1.2Q.6 .4 1.4 .4H4.6L6 2H11Q11.8 2 11.8 2.8V4H3.4L.6 9.6Z" fill="#a8a8a8"/><path d="M3.8 4.8H13.6L10.8 10.6H1Z" fill="#a8a8a8"/><path d="M.9 10.2 3.6 4.4H14" fill="none" stroke="#2d2d2d" stroke-width=".7"/></svg>
<div class="t " style="left:52px;top:150px;">AvatarEditor</div>
<svg class="i" style="left:50px;top:170px" width="13" height="11" viewBox="0 0 13 11" ><path d="M.5 1.200Q.5 .4 1.300 .4H4.600L6 2H11.600Q12.400 2 12.400 2.800V9.400Q12.400 10.200 11.600 10.200H1.300Q.5 10.200 .5 9.400Z" fill="#a8a8a8"/></svg>
<div class="t " style="left:66px;top:166px;">Headshots</div>
<svg class="i" style="left:36.5px;top:187.5px" width="9" height="8" viewBox="0 0 9 8" ><path d="M0 0H9L4.5 8Z" fill="#5e5e5e"/></svg>
<svg class="i" style="left:50px;top:186px" width="14" height="11" viewBox="0 0 14 11" ><path d="M.6 1.2Q.6 .4 1.4 .4H4.6L6 2H11Q11.8 2 11.8 2.8V4H3.4L.6 9.6Z" fill="#a8a8a8"/><path d="M3.8 4.8H13.6L10.8 10.6H1Z" fill="#a8a8a8"/><path d="M.9 10.2 3.6 4.4H14" fill="none" stroke="#2d2d2d" stroke-width=".7"/></svg>
<div class="t " style="left:66px;top:182px;">Profiles</div>
<svg class="i" style="left:64px;top:202px" width="13" height="11" viewBox="0 0 13 11" ><path d="M.5 1.200Q.5 .4 1.300 .4H4.600L6 2H11.600Q12.400 2 12.400 2.800V9.400Q12.400 10.200 11.600 10.200H1.300Q.5 10.200 .5 9.400Z" fill="#a8a8a8"/></svg>
<div class="t " style="left:80px;top:198px;">Resources</div>
<svg class="i" style="left:23px;top:219px" width="8" height="9" viewBox="0 0 8 9" ><path d="M0 0V9L8 4.5Z" fill="#5e5e5e"/></svg>
<svg class="i" style="left:36px;top:218px" width="13" height="11" viewBox="0 0 13 11" ><path d="M.5 1.200Q.5 .4 1.300 .4H4.600L6 2H11.600Q12.400 2 12.400 2.800V9.400Q12.400 10.200 11.600 10.200H1.300Q.5 10.200 .5 9.400Z" fill="#a8a8a8"/></svg>
<div class="t " style="left:52px;top:214px;">SdkBootstrap</div>
<svg class="i" style="left:23px;top:235px" width="8" height="9" viewBox="0 0 8 9" ><path d="M0 0V9L8 4.5Z" fill="#5e5e5e"/></svg>
<svg class="i" style="left:36px;top:234px" width="13" height="11" viewBox="0 0 13 11" ><path d="M.5 1.200Q.5 .4 1.300 .4H4.600L6 2H11.600Q12.400 2 12.400 2.800V9.400Q12.400 10.200 11.600 10.200H1.300Q.5 10.200 .5 9.400Z" fill="#a8a8a8"/></svg>
<div class="t " style="left:52px;top:230px;">ServiceManagement</div>
<svg class="i" style="left:22px;top:250px" width="13" height="11" viewBox="0 0 13 11" ><path d="M.5 1.200Q.5 .4 1.300 .4H4.600L6 2H11.600Q12.400 2 12.400 2.800V9.400Q12.400 10.200 11.600 10.200H1.300Q.5 10.200 .5 9.400Z" fill="#a8a8a8"/></svg>
<div class="t " style="left:38px;top:246px;">Resources</div>
<svg class="i" style="left:9px;top:267px" width="8" height="9" viewBox="0 0 8 9" ><path d="M0 0V9L8 4.5Z" fill="#5e5e5e"/></svg>
<svg class="i" style="left:22px;top:266px" width="13" height="11" viewBox="0 0 13 11" ><path d="M.5 1.200Q.5 .4 1.300 .4H4.600L6 2H11.600Q12.400 2 12.400 2.800V9.400Q12.400 10.200 11.600 10.200H1.300Q.5 10.200 .5 9.400Z" fill="#a8a8a8"/></svg>
<div class="t " style="left:38px;top:262px;">Samples</div>
<svg class="i" style="left:22px;top:282px" width="13" height="11" viewBox="0 0 13 11" ><path d="M.5 1.200Q.5 .4 1.300 .4H4.600L6 2H11.600Q12.400 2 12.400 2.800V9.400Q12.400 10.200 11.600 10.200H1.300Q.5 10.200 .5 9.400Z" fill="#a8a8a8"/></svg>
<div class="t " style="left:38px;top:278px;">Scenes</div>
<svg class="i" style="left:22px;top:298px" width="13" height="11" viewBox="0 0 13 11" ><path d="M.5 1.200Q.5 .4 1.300 .4H4.600L6 2H11.600Q12.400 2 12.400 2.800V9.400Q12.400 10.200 11.600 10.200H1.300Q.5 10.200 .5 9.400Z" fill="#a8a8a8"/></svg>
<div class="t " style="left:38px;top:294px;">Settings</div>
<svg class="i" style="left:9px;top:315px" width="8" height="9" viewBox="0 0 8 9" ><path d="M0 0V9L8 4.5Z" fill="#5e5e5e"/></svg>
<svg class="i" style="left:22px;top:314px" width="13" height="11" viewBox="0 0 13 11" ><path d="M.5 1.200Q.5 .4 1.300 .4H4.600L6 2H11.600Q12.400 2 12.400 2.800V9.400Q12.400 10.200 11.600 10.200H1.300Q.5 10.200 .5 9.400Z" fill="#a8a8a8"/></svg>
<div class="t " style="left:38px;top:310px;">TextMesh Pro</div>
<svg class="i" style="left:9px;top:331px" width="8" height="9" viewBox="0 0 8 9" ><path d="M0 0V9L8 4.5Z" fill="#5e5e5e"/></svg>
<svg class="i" style="left:22px;top:330px" width="13" height="11" viewBox="0 0 13 11" ><path d="M.5 1.200Q.5 .4 1.300 .4H4.600L6 2H11.600Q12.400 2 12.400 2.800V9.400Q12.400 10.200 11.600 10.200H1.300Q.5 10.200 .5 9.400Z" fill="#a8a8a8"/></svg>
<div class="t " style="left:38px;top:326px;">TutorialInfo</div>
<svg class="i" style="left:-5px;top:347px" width="8" height="9" viewBox="0 0 8 9" ><path d="M0 0V9L8 4.5Z" fill="#5e5e5e"/></svg>
<svg class="i" style="left:8px;top:346px" width="13" height="11" viewBox="0 0 13 11" ><path d="M.5 1.200Q.5 .4 1.300 .4H4.600L6 2H11.600Q12.400 2 12.400 2.800V9.400Q12.400 10.200 11.600 10.200H1.300Q.5 10.200 .5 9.400Z" fill="#b4b4b4"/></svg>
<div class="t " style="left:25px;top:342px;font-weight:700;color:#b4b4b4;letter-spacing:0;">Packages</div>
<div class="abs" style="left:399px;top:40px;width:548px;height:20px;background:#2d2d2d;border-bottom:1px solid #262626"></div>
<div class="t " style="left:403px;top:41px;letter-spacing:-0.10px;">Assets</div>
<svg class="i" style="left:446px;top:46px" width="6" height="8" viewBox="0 0 6 8" ><path d="M.8 .6 5 4 .8 7.400" fill="none" stroke="#8a8a8a" stroke-width="1.1"/></svg>
<div class="t " style="left:458px;top:41px;letter-spacing:-0.12px;">Genies</div>
<svg class="i" style="left:503px;top:46px" width="6" height="8" viewBox="0 0 6 8" ><path d="M.8 .6 5 4 .8 7.400" fill="none" stroke="#8a8a8a" stroke-width="1.1"/></svg>
<div class="t " style="left:515px;top:41px;letter-spacing:0.04px;">AvatarEditor</div>
<svg class="i" style="left:590px;top:46px" width="6" height="8" viewBox="0 0 6 8" ><path d="M.8 .6 5 4 .8 7.400" fill="none" stroke="#8a8a8a" stroke-width="1.1"/></svg>
<div class="t " style="left:602px;top:41px;letter-spacing:0.05px;">Profiles</div>
<svg class="i" style="left:650px;top:46px" width="6" height="8" viewBox="0 0 6 8" ><path d="M.8 .6 5 4 .8 7.400" fill="none" stroke="#8a8a8a" stroke-width="1.1"/></svg>
<div class="t " style="left:662px;top:41px;font-weight:700;color:#b4b4b4;letter-spacing:-0.37px;">Resources</div>
<div class="abs" style="left:399px;top:61px;width:548px;height:16px;background:#2e4a78"></div>
<svg class="i" style="left:416.5px;top:62px" width="15" height="14" viewBox="0 0 15 14" ><g fill="none" stroke="#dcdcdc" stroke-width="1" stroke-linejoin="round"><path d="M6 .8 11 3.400V6.600M6 .8 1 3.600V9.400L6 12.200V6.400L11 3.600M1.200 3.700 6 6.400"/><path d="M9.800 7.200Q8.600 7.200 8.600 8.200V9.200Q8.600 10 7.800 10.200 8.600 10.400 8.600 11.200V12.200Q8.600 13.200 9.800 13.200M12.200 7.200Q13.400 7.200 13.400 8.200V9.200Q13.400 10 14.200 10.200 13.400 10.400 13.400 11.200V12.200Q13.400 13.200 12.200 13.200"/></g></svg>
<div class="t " style="left:433px;top:61px;color:#e4e4e4;letter-spacing:-0.08px;">ExampleProfile</div>
</div>
</body></html>
